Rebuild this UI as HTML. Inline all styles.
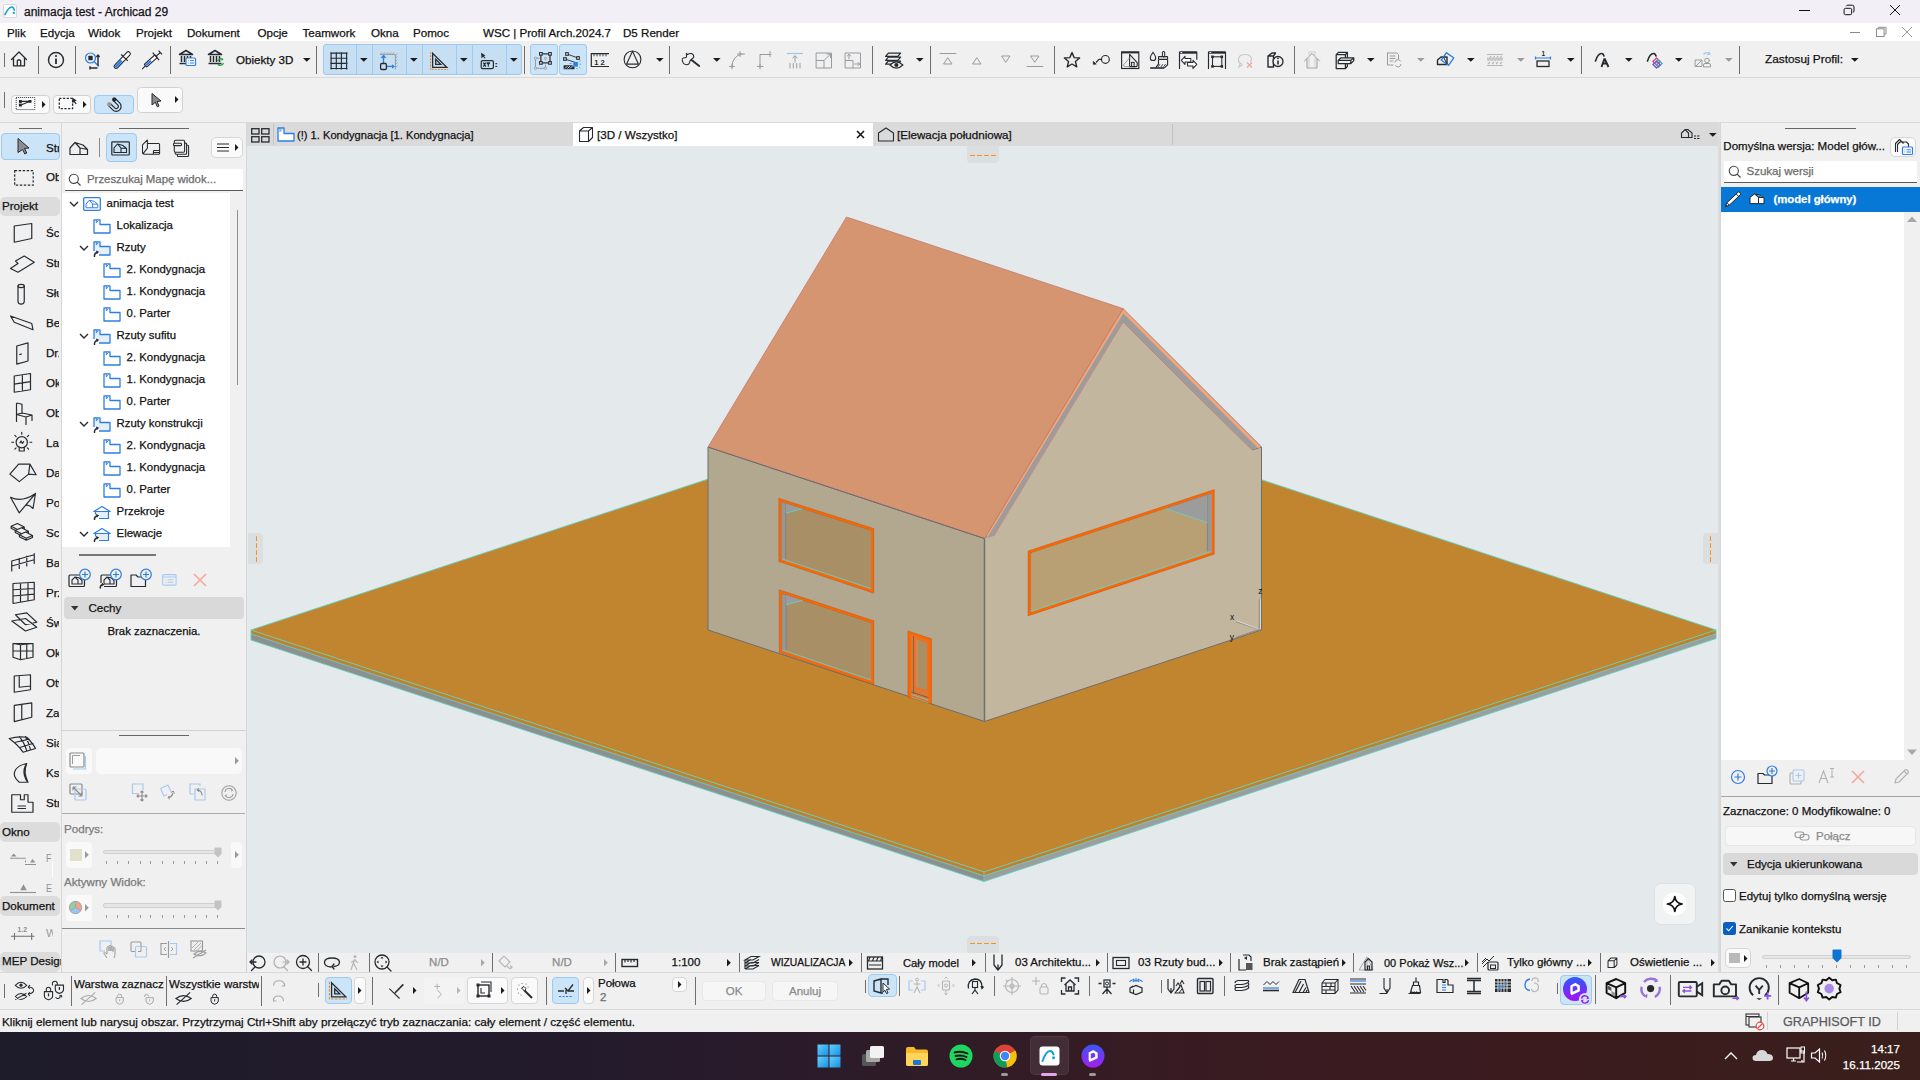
<!DOCTYPE html>
<html><head><meta charset="utf-8"><style>*{box-sizing:border-box;margin:0;padding:0}
html,body{width:1920px;height:1080px;overflow:hidden;background:#f0f0f0;font-family:"Liberation Sans",sans-serif;font-size:12px;color:#1b1b1b}
.a{position:absolute}
.t{position:absolute;white-space:nowrap;line-height:1;-webkit-text-stroke:0.25px currentColor}
svg{position:absolute;overflow:visible}
</style></head><body>
<div class="a" style="left:0px;top:0px;width:1920px;height:23px;background:#f3eff7;"></div>
<div class="a" style="left:0px;top:23px;width:1920px;height:18px;background:#ffffff;"></div>
<div class="a" style="left:0px;top:41px;width:1920px;height:37px;background:#f0f0f0;"></div>
<div class="a" style="left:0px;top:77.0px;width:1920px;height:1px;background:#d9d9d9;"></div>
<div class="a" style="left:0px;top:78px;width:1920px;height:45px;background:#f0f0f0;"></div>
<div class="a" style="left:0px;top:122.0px;width:1920px;height:1px;background:#d9d9d9;"></div>
<div class="a" style="left:0px;top:123px;width:61px;height:850px;background:#f0f0f0;"></div>
<div class="a" style="left:61px;top:123px;width:1px;height:850px;background:#d6d6d6;"></div>
<div class="a" style="left:62px;top:123px;width:185px;height:850px;background:#f0f0f0;"></div>
<div class="a" style="left:246px;top:123px;width:1px;height:850px;background:#d6d6d6;"></div>
<div class="a" style="left:247px;top:123px;width:1473px;height:23px;background:#dadada;"></div>
<div class="a" style="left:247px;top:146px;width:1473px;height:807px;background:#e4e9ec;"></div>
<div class="a" style="left:247px;top:953px;width:1473px;height:19px;background:#f0f0f0;"></div>
<div class="a" style="left:1720px;top:123px;width:200px;height:850px;background:#f0f0f0;"></div>
<div class="a" style="left:1720px;top:123px;width:1px;height:850px;background:#d6d6d6;"></div>
<div class="a" style="left:0px;top:972px;width:1920px;height:38px;background:#f0f0f0;"></div>
<div class="a" style="left:0px;top:972.0px;width:1920px;height:1px;background:#d9d9d9;"></div>
<div class="a" style="left:0px;top:1009.0px;width:1920px;height:1px;background:#d9d9d9;"></div>
<div class="a" style="left:0px;top:1010px;width:1920px;height:22px;background:#f0f0f0;"></div>
<div class="a" style="left:0px;top:1032px;width:1920px;height:48px;background:linear-gradient(90deg,#1e1b2a 0%,#231b2c 30%,#2b1b2a 42%,#301c26 50%,#381b22 62%,#3b1b1e 80%,#3a1f1c 100%);"></div>
<!-- 3D scene -->
<svg width="1920" height="1080" style="left:0;top:0" viewBox="0 0 1920 1080">
 <!-- ground slab -->
 <polygon points="251,633 984,875 984,881.5 251,640" fill="#8f8f8f"/>
 <polygon points="984,875 1716,633 1716,638.5 984,881.5" fill="#9d9d9d"/>
 <polygon points="251,630 984,872 984,875.5 251,633.5" fill="#c2802a"/>
 <polygon points="984,872 1716,630 1716,633.5 984,875.5" fill="#c2802a"/>
 <polygon points="251,630 984,388 1716,630 984,872" fill="#c2852f"/>
 <polyline points="251,634 984,876 1716,634" fill="none" stroke="#5fcfbf" stroke-width="0.9"/>
 <polygon points="251,630 984,388 1716,630 1716,638.5 984,881.5 251,640" fill="none" stroke="#5fcfbf" stroke-width="0.9"/>
 <polyline points="251,630 984,872 1716,630" fill="none" stroke="#5fcfbf" stroke-width="0.9"/>
 <line x1="984" y1="872" x2="984" y2="881.5" stroke="#5fcfbf" stroke-width="0.9"/>
 <!-- left wall -->
 <polygon points="708,447 984.5,538.5 984.5,721.5 708,630" fill="#b2a78f" stroke="#6d6d70" stroke-width="1"/>
 <!-- gable wall -->
 <polygon points="984.5,538.5 1123,322 1252,450 1261.5,447 1261.5,630 984.5,721.5" fill="#c3b69f" stroke="#6d6d70" stroke-width="1"/>
 <!-- roof edge band -->
 <polygon points="984.5,538.5 1123,308.6 1261.4,446.7 1252,450 1123,322 994,536" fill="#9c9c9c"/>
 <polyline points="986.5,536 1123,311 1259.5,447.5" fill="none" stroke="#f0a878" stroke-width="3"/>
 <polyline points="984.5,538.5 1123,308.6 1261.4,446.7" fill="none" stroke="#c87878" stroke-width="0.9"/>
 <polyline points="994,536 1123,322 1252,450" fill="none" stroke="#d08a82" stroke-width="0.9"/>
 <!-- roof -->
 <polygon points="846.5,217 1123,308.6 984.5,538.5 708,447" fill="#d49570" stroke="#c47a70" stroke-width="0.8"/>
 <line x1="708" y1="447" x2="984.5" y2="538.5" stroke="#6d6d70" stroke-width="1"/>
 <line x1="984.5" y1="538.5" x2="984.5" y2="721.5" stroke="#707070" stroke-width="1.5"/>
 <!-- window 1 -->
 <polygon points="778.80,498.30 873.80,528.60 873.80,593.20 778.80,561.60" fill="#ff6600"/>
 <polygon points="781.40,501.86 871.20,530.50 871.20,589.61 781.40,559.74" fill="#a88f65"/>
 <polygon points="781.40,501.86 785.70,503.23 785.70,558.67 781.40,559.74" fill="#979797"/>
 <line x1="785.70" y1="503.23" x2="785.70" y2="558.67" stroke="#7d7d7d" stroke-width="0.8"/>
 <polygon points="785.70,503.23 802.70,508.65 785.70,513.23" fill="#9c9c9c"/>
 <line x1="785.70" y1="513.23" x2="802.70" y2="508.65" stroke="#6fc9c0" stroke-width="0.9"/>
 <line x1="781.90" y1="558.90" x2="871.20" y2="588.61" stroke="#6fc9c0" stroke-width="0.9"/>
 <polygon points="778.80,498.30 873.80,528.60 873.80,593.20 778.80,561.60" fill="none" stroke="#7a4a2a" stroke-width="0.5" stroke-opacity="0.55"/>
 <polyline points="781.40,559.74 781.40,501.86 871.20,530.50" fill="none" stroke="#6a4a30" stroke-width="0.6" stroke-opacity="0.6" stroke-dasharray="1,1"/>
 <!-- window 2 -->
 <polygon points="779.20,589.80 873.80,620.80 873.80,684.60 779.20,652.60" fill="#ff6600"/>
 <polygon points="781.80,593.39 871.20,622.68 871.20,680.98 781.80,650.74" fill="#a88f65"/>
 <polygon points="781.80,593.39 786.10,594.80 786.10,649.70 781.80,650.74" fill="#979797"/>
 <line x1="786.10" y1="594.80" x2="786.10" y2="649.70" stroke="#7d7d7d" stroke-width="0.8"/>
 <polygon points="786.10,594.80 803.10,600.37 786.10,604.80" fill="#9c9c9c"/>
 <line x1="786.10" y1="604.80" x2="803.10" y2="600.37" stroke="#6fc9c0" stroke-width="0.9"/>
 <line x1="782.30" y1="649.91" x2="871.20" y2="679.98" stroke="#6fc9c0" stroke-width="0.9"/>
 <polygon points="779.20,589.80 873.80,620.80 873.80,684.60 779.20,652.60" fill="none" stroke="#7a4a2a" stroke-width="0.5" stroke-opacity="0.55"/>
 <polyline points="781.80,650.74 781.80,593.39 871.20,622.68" fill="none" stroke="#6a4a30" stroke-width="0.6" stroke-opacity="0.6" stroke-dasharray="1,1"/>
 <!-- door -->
 <polygon points="907.9,630.9 931.5,638.8 931.5,704.1 907.9,697" fill="#ff6600"/>
 <polygon points="910.9,634.8 928.5,640.7 928.5,701.2 910.9,695.2" fill="#d97a3a"/>
 <line x1="913.6" y1="636" x2="913.6" y2="694" stroke="#6b5a4a" stroke-width="0.8"/>
 <polygon points="914.3,637.3 928.5,642 928.5,692.6 914.3,687.9" fill="#ff6a10"/>
 <polygon points="915.8,639.3 927,643 927,690.7 915.8,686.9" fill="#a88f65"/>
 <polygon points="915.8,639.3 918,640 918,687.6 915.8,686.9" fill="#c98a5a"/>
 <line x1="911.5" y1="694.5" x2="928.5" y2="700.3" stroke="#6fc9c0" stroke-width="0.9"/>
 <line x1="911.5" y1="697.2" x2="928.5" y2="703" stroke="#6fc9c0" stroke-width="0.9"/>
 <line x1="911.5" y1="692" x2="928.5" y2="697.6" stroke="#5a5048" stroke-width="0.7"/>
 <polygon points="907.9,630.9 931.5,638.8 931.5,704.1 907.9,697" fill="none" stroke="#7a4a2a" stroke-width="0.5" stroke-opacity="0.55"/>
 <!-- window 3 -->
 <polygon points="1028.00,551.00 1214.30,489.60 1214.30,554.20 1028.00,615.90" fill="#ff6600"/>
 <polygon points="1030.60,552.88 1211.70,493.19 1211.70,552.32 1030.60,612.30" fill="#b8a074"/>
 <polygon points="1207.40,494.61 1211.70,493.19 1211.70,552.32 1207.40,551.25" fill="#979797"/>
 <line x1="1207.40" y1="494.61" x2="1207.40" y2="551.25" stroke="#7d7d7d" stroke-width="0.8"/>
 <polygon points="1207.40,494.61 1165.40,508.45 1207.40,522.61" fill="#9c9c9c"/>
 <line x1="1207.40" y1="522.61" x2="1165.40" y2="508.45" stroke="#6fc9c0" stroke-width="0.9"/>
 <line x1="1030.60" y1="611.30" x2="1211.20" y2="551.49" stroke="#6fc9c0" stroke-width="0.9"/>
 <polygon points="1028.00,551.00 1214.30,489.60 1214.30,554.20 1028.00,615.90" fill="none" stroke="#7a4a2a" stroke-width="0.5" stroke-opacity="0.55"/>
 <polyline points="1030.60,612.30 1030.60,552.88 1211.70,493.19" fill="none" stroke="#6a4a30" stroke-width="0.6" stroke-opacity="0.6" stroke-dasharray="1,1"/>
 <!-- axis gizmo -->
 <path d="M1259.3,599 V629.6 M1259.3,629.6 L1236.2,621.8 M1259.3,629.6 L1235.5,637.6" fill="none" stroke="#8f8a80" stroke-width="1.1"/>
 <path d="M1260.4,599 V629 M1258.6,629 L1236.6,620.8" fill="none" stroke="#f4f1ea" stroke-width="0.7"/>
 <text x="1258.2" y="593.6" font-size="8.5" font-family="Liberation Sans" fill="#111">z</text>
 <text x="1230" y="620.4" font-size="8.5" font-family="Liberation Sans" fill="#111">x</text>
 <text x="1229.8" y="639.6" font-size="8.5" font-family="Liberation Sans" fill="#111">y</text>
</svg>
<svg style="left:3px;top:4px" width="14" height="14" viewBox="0 0 14 14"><rect x="0.5" y="0.5" width="13" height="13" rx="1.5" fill="#fff" stroke="#cfcfcf" stroke-width="0.8"/><path d="M2,10.6 C4.5,5.5 6.5,3 8.7,3 C10.3,3 11,4.5 11.3,6.2" fill="none" stroke="#139fd6" stroke-width="1.6" stroke-linecap="round"/><rect x="9.8" y="7.8" width="2" height="2" fill="#139fd6"/></svg>
<div class="t" style="left:24px;top:5.84px;font-size:12px;color:#111;font-weight:normal;">animacja test - Archicad 29</div>
<div class="a" style="left:1799px;top:9.9px;width:10.5px;height:1px;background:#111;"></div>
<svg style="left:1840px;top:2px" width="18" height="16" viewBox="1840 2 18 16"><rect x="1844.1" y="8.3" width="7.6" height="6.4" rx="1.4" fill="none" stroke="#111" stroke-width="1"/><path d="M1846.2,6.3 Q1846.6,5.2 1847.8,5.2 H1852.3 Q1854,5.2 1854,6.9 V10.9 Q1854,12.1 1853,12.4" fill="none" stroke="#111" stroke-width="1"/></svg>
<svg style="left:1886px;top:2px" width="18" height="16" viewBox="1886 2 18 16"><path d="M1890,5.1 L1900,15 M1900,5.1 L1890,15" stroke="#111" stroke-width="1"/></svg>
<div class="t" style="left:7px;top:26.88px;font-size:11.6px;color:#111;font-weight:normal;">Plik</div>
<div class="t" style="left:40px;top:26.88px;font-size:11.6px;color:#111;font-weight:normal;">Edycja</div>
<div class="t" style="left:88px;top:26.88px;font-size:11.6px;color:#111;font-weight:normal;">Widok</div>
<div class="t" style="left:136px;top:26.88px;font-size:11.6px;color:#111;font-weight:normal;">Projekt</div>
<div class="t" style="left:187px;top:26.88px;font-size:11.6px;color:#111;font-weight:normal;">Dokument</div>
<div class="t" style="left:257.5px;top:26.88px;font-size:11.6px;color:#111;font-weight:normal;">Opcje</div>
<div class="t" style="left:302.5px;top:26.88px;font-size:11.6px;color:#111;font-weight:normal;">Teamwork</div>
<div class="t" style="left:371px;top:26.88px;font-size:11.6px;color:#111;font-weight:normal;">Okna</div>
<div class="t" style="left:413px;top:26.88px;font-size:11.6px;color:#111;font-weight:normal;">Pomoc</div>
<div class="t" style="left:483px;top:26.88px;font-size:11.6px;color:#111;font-weight:normal;">WSC | Profil Arch.2024.7</div>
<div class="t" style="left:623px;top:26.88px;font-size:11.6px;color:#111;font-weight:normal;">D5 Render</div>
<div class="a" style="left:1850px;top:31.9px;width:10px;height:1px;background:#8a8a8a;"></div>
<svg style="left:1872px;top:24px" width="18" height="16" viewBox="1872 24 18 16"><rect x="1876.5" y="28.8" width="7.6" height="7.7" fill="none" stroke="#8a8a8a" stroke-width="1"/><path d="M1878.5,28.8 V27.3 H1886 V34 H1884.1" fill="none" stroke="#8a8a8a" stroke-width="1"/></svg>
<svg style="left:1898px;top:24px" width="18" height="16" viewBox="1898 24 18 16"><path d="M1902,27.2 L1912,37 M1912,27.2 L1902,37" stroke="#8a8a8a" stroke-width="0.9"/></svg>
<div class="a" style="left:4.0px;top:53px;width:1px;height:13.5px;background:#6e6e6e;"></div>
<div class="a" style="left:38.0px;top:46px;width:1px;height:27.5px;background:#6e6e6e;"></div>
<div class="a" style="left:75.0px;top:46px;width:1px;height:27.5px;background:#6e6e6e;"></div>
<div class="a" style="left:169.8px;top:46px;width:1px;height:27.5px;background:#6e6e6e;"></div>
<div class="a" style="left:316.0px;top:46px;width:1px;height:27.5px;background:#6e6e6e;"></div>
<div class="a" style="left:524.0px;top:46px;width:1px;height:27.5px;background:#6e6e6e;"></div>
<div class="a" style="left:669.0px;top:46px;width:1px;height:27.5px;background:#6e6e6e;"></div>
<div class="a" style="left:872.0px;top:46px;width:1px;height:27.5px;background:#6e6e6e;"></div>
<div class="a" style="left:930.0px;top:46px;width:1px;height:27.5px;background:#6e6e6e;"></div>
<div class="a" style="left:1054.0px;top:46px;width:1px;height:27.5px;background:#6e6e6e;"></div>
<div class="a" style="left:1294.0px;top:46px;width:1px;height:27.5px;background:#6e6e6e;"></div>
<div class="a" style="left:1581.0px;top:46px;width:1px;height:27.5px;background:#6e6e6e;"></div>
<div class="a" style="left:1739.0px;top:46px;width:1px;height:27.5px;background:#6e6e6e;"></div>
<svg style="left:9.00px;top:49.00px" width="20.00" height="20.00" viewBox="0 0 20 20"><path d="M2.5,10.5 L10,3 L17.5,10.5 M4.5,8.5 V16.8 H15.5 V8.5 M8.3,16.8 V12 Q8.3,11 9.3,11 H10.7 Q11.7,11 11.7,12 V16.8" fill="none" stroke="#262b30" stroke-width="1.3" stroke-linejoin="round" stroke-linecap="round"/></svg>
<svg style="left:46.00px;top:50.00px" width="20.00" height="20.00" viewBox="0 0 20 20"><circle cx="10" cy="10" r="7.5" fill="none" stroke="#262b30" stroke-width="1.4" stroke-linejoin="round" stroke-linecap="round"/><path d="M10,8.5 V14" stroke="#262b30" stroke-width="1.8"/><circle cx="10" cy="6" r="1.1" fill="#262b30"/></svg>
<svg style="left:83.00px;top:49.50px" width="20.00" height="20.00" viewBox="0 0 20 20"><circle cx="7.5" cy="8" r="5" fill="none" stroke="#2f7de1" stroke-width="1.2"/><rect x="5.3" y="5.8" width="4.4" height="4.4" rx="0.8" fill="#262b30"/><path d="M11,11.5 L16,16.5" stroke="#2f7de1" stroke-width="1.2"/><path d="M15,15 V5.5 M13.8,6.5 L15,5 L16.2,6.5" fill="none" stroke="#262b30" stroke-width="1.4" stroke-linejoin="round" stroke-linecap="round"/><path d="M14,18 H7.5 M7,16.8 V19" fill="none" stroke="#262b30" stroke-width="1.4" stroke-linejoin="round" stroke-linecap="round"/></svg>
<svg style="left:112.00px;top:49.50px" width="20.00" height="20.00" viewBox="0 0 20 20"><g transform="rotate(-46 10.2 10.1)"><rect x="-0.6" y="8.1" width="21.6" height="4" rx="2" fill="#fff" stroke="#262b30" stroke-width="1.1"/><path d="M0.2,8.9 H9.5 V11.3 H0.2 Z" fill="#2a7ff0"/><path d="M13.5,5.5 V14.7" stroke="#262b30" stroke-width="1.2"/></g></svg>
<svg style="left:141.00px;top:49.50px" width="20.00" height="20.00" viewBox="0 0 20 20"><path d="M1.2,19.2 L4.3,15.9" stroke="#262b30" stroke-width="1.1"/><g transform="rotate(-41.5 9.8 10.9)"><rect x="2.5" y="9.1" width="14.6" height="3.6" rx="0.8" fill="#fff" stroke="#262b30" stroke-width="1.1"/><path d="M3.2,9.8 H10 V12 H3.2 Z" fill="#2a7ff0"/><path d="M16.6,6 V15.8 M17,10.9 H22.5 M22.5,8.3 V13.5" stroke="#262b30" stroke-width="1.2"/></g></svg>
<svg style="left:177.00px;top:48.00px" width="20.00" height="20.00" viewBox="0 0 20 20"><path d="M2.5,6.5 L9,2.5 L15.5,6.5 Z M2.5,15.5 H15.5 M4.5,8 V14 M7.5,8 V14 M10.5,8 V14 M13.5,8 V14" fill="none" stroke="#262b30" stroke-width="1.5" stroke-linejoin="round"/><rect x="9" y="10" width="9.5" height="7.5" rx="1" fill="#fff" stroke="#2f7de1" stroke-width="1.2"/><path d="M11,12.6 H11.6 M13,12.6 H17 M11,15 H11.6 M13,15 H17" stroke="#2f7de1" stroke-width="1"/></svg>
<svg style="left:206.00px;top:48.00px" width="20.00" height="20.00" viewBox="0 0 20 20"><path d="M2.5,6.5 L9,2.5 L15.5,6.5 Z M2.5,15.5 H15.5 M4.5,8 V14 M7.5,8 V14 M10.5,8 V14 M13.5,8 V14" fill="none" stroke="#262b30" stroke-width="1.5" stroke-linejoin="round"/><path d="M11.5,13 A3.5,3.5 0 0 1 17,11.5 M17.5,15 A3.5,3.5 0 0 1 12,16.5" fill="none" stroke="#22a447" stroke-width="1.3"/><path d="M16,10 L17.5,12 L15,12.5 Z M13,18 L11.5,16 L14,15.5 Z" fill="#22a447"/></svg>
<div class="t" style="left:236px;top:54.18px;font-size:11.6px;color:#111;font-weight:normal;">Obiekty 3D</div>
<svg style="left:302.7px;top:58.1px" width="7.6" height="3.8" viewBox="0 0 7.6 3.8"><polygon points="0,0 7.6,0 3.8,3.8" fill="#1b1b1b"/></svg>
<div class="a" style="left:322.5px;top:44px;width:199.5px;height:30.5px;background:#c6dff3;border:1px solid #9ccaf0;border-radius:3px"></div>
<div class="a" style="left:355.5px;top:45px;width:1px;height:28.5px;background:#9ccaf0;"></div>
<div class="a" style="left:371.5px;top:45px;width:1px;height:28.5px;background:#9ccaf0;"></div>
<div class="a" style="left:405.5px;top:45px;width:1px;height:28.5px;background:#9ccaf0;"></div>
<div class="a" style="left:421.5px;top:45px;width:1px;height:28.5px;background:#9ccaf0;"></div>
<div class="a" style="left:455.5px;top:45px;width:1px;height:28.5px;background:#9ccaf0;"></div>
<div class="a" style="left:471.5px;top:45px;width:1px;height:28.5px;background:#9ccaf0;"></div>
<div class="a" style="left:505.5px;top:45px;width:1px;height:28.5px;background:#9ccaf0;"></div>
<svg style="left:360.2px;top:58.1px" width="7.6" height="3.8" viewBox="0 0 7.6 3.8"><polygon points="0,0 7.6,0 3.8,3.8" fill="#1b1b1b"/></svg>
<svg style="left:410.2px;top:58.1px" width="7.6" height="3.8" viewBox="0 0 7.6 3.8"><polygon points="0,0 7.6,0 3.8,3.8" fill="#1b1b1b"/></svg>
<svg style="left:460.2px;top:58.1px" width="7.6" height="3.8" viewBox="0 0 7.6 3.8"><polygon points="0,0 7.6,0 3.8,3.8" fill="#1b1b1b"/></svg>
<svg style="left:510.2px;top:58.1px" width="7.6" height="3.8" viewBox="0 0 7.6 3.8"><polygon points="0,0 7.6,0 3.8,3.8" fill="#1b1b1b"/></svg>
<svg style="left:328px;top:50px" width="22" height="22" viewBox="328 50 22 22"><path d="M330.3,53.1 H347.5 M330.3,58.2 H347.5 M330.3,63.4 H347.5 M330.3,68.5 H347.5 M331.1,52.2 V69.4 M336.3,52.2 V69.4 M341.4,52.2 V69.4 M346.6,52.2 V69.4" stroke="#262b30" stroke-width="1.15"/></svg>
<svg style="left:378px;top:50px" width="22" height="22" viewBox="378 50 22 22"><path d="M380,54.4 H395.4 V69.5" fill="none" stroke="#9a9a9a" stroke-width="1"/><path d="M380.5,54 L382,52.3 M383.5,54 L385,52.3 M386.5,54 L388,52.3 M389.5,54 L391,52.3 M392.5,54 L394,52.3 M395.8,55 L397.3,53.5 M395.8,58 L397.3,56.5 M395.8,61 L397.3,59.5 M395.8,64 L397.3,62.5 M395.8,67 L397.3,65.5" stroke="#9a9a9a" stroke-width="0.9"/><path d="M383.5,63 V56" stroke="#2f7de1" stroke-width="1.3"/><path d="M381.3,57.6 L383.5,55 L385.7,57.6 Z" fill="#2f7de1" stroke="#2f7de1" stroke-width="0.8"/><path d="M386.6,66.4 H393" stroke="#2f7de1" stroke-width="1.3"/><path d="M392,64.2 L395,66.4 L392,68.6 Z" fill="#2f7de1"/><rect x="380.6" y="63.5" width="5.8" height="6" rx="1.2" fill="none" stroke="#262b30" stroke-width="1.3"/></svg>
<svg style="left:428px;top:50px" width="22" height="22" viewBox="428 50 22 22"><path d="M430.5,52.2 V69.5 H448" fill="none" stroke="#f5861f" stroke-width="1.1" stroke-dasharray="1.8,1.3"/><path d="M432.6,53.3 V67.3 H446.8 Z M435.7,59.3 V64.3 H440.7 Z" fill="none" stroke="#262b30" stroke-width="1.3" stroke-linejoin="miter"/></svg>
<svg style="left:478px;top:50px" width="22" height="22" viewBox="478 50 22 22"><path d="M481,52.8 L485.6,55.4 L483.8,56 L485.6,58 L484.8,58.6 L483,56.7 L481.6,58.5 Z" fill="#262b30"/><rect x="481.2" y="60.6" width="12.2" height="8" rx="1.4" fill="none" stroke="#262b30" stroke-width="1.2"/><path d="M483.3,62.6 L485.8,66.6 M485.8,62.6 L483.3,66.6 M486.8,62.6 L488.3,64.6 L489.8,62.6 M488.3,64.6 V66.7" stroke="#262b30" stroke-width="1.1"/><path d="M495.3,63.7 H497.2 M495.3,66.4 H497.2" stroke="#262b30" stroke-width="1"/></svg>
<div class="a" style="left:530px;top:44px;width:28px;height:30.5px;background:#cce4f7;border:1px solid #9ccaf0;border-radius:3px"></div>
<div class="a" style="left:559px;top:44px;width:28px;height:30.5px;background:#cce4f7;border:1px solid #9ccaf0;border-radius:3px"></div>
<svg style="left:530px;top:48px" width="28" height="24" viewBox="530 48 28 24"><path d="M535.5,58.3 V68.3 H545.5 V64.5 M535.5,58.3 H539.5" fill="none" stroke="#9a9a9a" stroke-width="1"/><circle cx="535.5" cy="58.3" r="1.2" fill="#cce4f7" stroke="#9a9a9a" stroke-width="0.9"/><circle cx="535.5" cy="68.3" r="1.2" fill="#cce4f7" stroke="#9a9a9a" stroke-width="0.9"/><circle cx="545.5" cy="68.3" r="1.2" fill="#cce4f7" stroke="#9a9a9a" stroke-width="0.9"/><rect x="540.9" y="53.9" width="9.1" height="9" fill="none" stroke="#262b30" stroke-width="1.2"/><rect x="539.6" y="52.6" width="2.6" height="2.6" fill="#fff" stroke="#262b30" stroke-width="1.1"/><rect x="548.7" y="52.6" width="2.6" height="2.6" fill="#fff" stroke="#262b30" stroke-width="1.1"/><rect x="539.6" y="61.6" width="2.6" height="2.6" fill="#fff" stroke="#262b30" stroke-width="1.1"/><rect x="548.7" y="61.6" width="2.6" height="2.6" fill="#fff" stroke="#262b30" stroke-width="1.1"/><circle cx="545.5" cy="58.3" r="1.1" fill="none" stroke="#9a9a9a" stroke-width="0.8"/><path d="M545.5,59.4 V60.5" stroke="#9a9a9a" stroke-width="0.8"/></svg>
<svg style="left:559px;top:48px" width="28" height="24" viewBox="559 48 28 24"><path d="M567,54 L578,58 M565,59 L575.5,62.5" stroke="#262b30" stroke-width="0.9"/><rect x="565.7" y="52.7" width="2.6" height="2.6" fill="#fff" stroke="#262b30" stroke-width="1.1"/><rect x="563.7" y="57.7" width="2.6" height="2.6" fill="#fff" stroke="#262b30" stroke-width="1.1"/><rect x="576.7" y="56.7" width="2.6" height="2.6" fill="#fff" stroke="#262b30" stroke-width="1.1"/><path d="M563.6,65.2 H572 L574.5,67 V69.3 H563.6 Z" fill="#262b30"/><path d="M565,68.5 L567.5,66 M567.5,68.5 L570,66 M570,68.5 L572.5,66" stroke="#cce4f7" stroke-width="0.9"/><rect x="573.3" y="62" width="4.6" height="4.6" fill="#2f7de1"/><path d="M579.3,61.5 L580.5,60.5 M579.5,64.2 H581 M579.3,67.2 L580.5,68.2 M576.5,68 L577.5,69.3 M569.5,63.5 H571.5" stroke="#2f7de1" stroke-width="0.7"/></svg>
<svg style="left:589px;top:50px" width="22" height="20" viewBox="589 50 22 20"><path d="M609,53.7 H591.3 V66.5 H609" fill="none" stroke="#262b30" stroke-width="1.2"/><path d="M594,53.7 V56.3 M597,53.7 V56.3 M600,53.7 V56.3 M603,53.7 V56.3 M606,53.7 V56.3" stroke="#262b30" stroke-width="0.9"/><text x="594.3" y="64.8" font-size="7.6" font-family="Liberation Sans" font-weight="bold" fill="#262b30">1</text><text x="600.5" y="64.8" font-size="7.6" font-family="Liberation Sans" font-weight="bold" fill="#262b30">2</text></svg>
<svg style="left:622px;top:48px" width="22" height="24" viewBox="622 48 22 24"><circle cx="632.5" cy="59.4" r="8.4" fill="none" stroke="#262b30" stroke-width="1.1"/><path d="M632.5,51.3 L638.4,64.1 H626.6 Z" fill="none" stroke="#262b30" stroke-width="1.1" stroke-linejoin="round"/></svg>
<svg style="left:655.7px;top:58.1px" width="7.6" height="3.8" viewBox="0 0 7.6 3.8"><polygon points="0,0 7.6,0 3.8,3.8" fill="#1b1b1b"/></svg>
<svg style="left:680px;top:50px" width="22" height="20" viewBox="680 50 22 20"><path d="M686.4,53.3 L687.6,54.6 Q689.5,53 691.5,53.6 Q694.2,54.6 693.7,57.4 L691.3,59.5 Q689.6,60.8 689.6,62.6 Q689,64.8 686.4,64.8 Q683.2,64.3 682.3,60.6 Q681.9,58.2 683.3,57.9 Q685.2,57.9 686.3,57.2 Q686.9,56.3 686.4,55.4 Z" fill="none" stroke="#262b30" stroke-width="1.05" stroke-linejoin="round"/><path d="M691.6,60 L699.2,66" stroke="#262b30" stroke-width="1.9" stroke-linecap="round"/></svg>
<svg style="left:713.2px;top:58.1px" width="7.6" height="3.8" viewBox="0 0 7.6 3.8"><polygon points="0,0 7.6,0 3.8,3.8" fill="#1b1b1b"/></svg>
<svg style="left:726.00px;top:49.50px" width="20.00" height="20.00" viewBox="0 0 20 20"><path d="M6,17 Q6,6 16,4" fill="none" stroke="#979b9e" stroke-width="1.0" stroke-linejoin="round" stroke-linecap="round"/><path d="M14,1.5 V6.5 M11.5,4 H18.5 M3.5,16.5 H8.5 M6,14 V19" fill="none" stroke="#979b9e" stroke-width="1.0" stroke-linejoin="round" stroke-linecap="round"/></svg>
<svg style="left:755.00px;top:49.50px" width="20.00" height="20.00" viewBox="0 0 20 20"><path d="M5,17 V4.5 H16" fill="none" stroke="#979b9e" stroke-width="1.0" stroke-linejoin="round" stroke-linecap="round"/><path d="M15,1.5 V6.5 M2.5,16.5 H8 M5,14 V19" fill="none" stroke="#979b9e" stroke-width="1.0" stroke-linejoin="round" stroke-linecap="round"/></svg>
<svg style="left:785.00px;top:49.50px" width="20.00" height="20.00" viewBox="0 0 20 20"><path d="M2,3.5 H18" stroke="#9ec4f0" stroke-width="1.2"/><path d="M10,6 V12 M7.8,8 L10,5.8 L12.2,8 M5,13.5 V18 M8.3,13.5 V18 M11.7,13.5 V18 M15,13.5 V18" fill="none" stroke="#979b9e" stroke-width="1.0" stroke-linejoin="round" stroke-linecap="round"/></svg>
<svg style="left:814.00px;top:49.50px" width="20.00" height="20.00" viewBox="0 0 20 20"><rect x="2.5" y="3" width="15" height="15" fill="none" stroke="#979b9e" stroke-width="1.0" stroke-linejoin="round" stroke-linecap="round"/><path d="M2.5,10.5 H10 V18 M10,10.5 L16.5,4 M13,4 H16.5 V7.5" fill="none" stroke="#979b9e" stroke-width="1.0" stroke-linejoin="round" stroke-linecap="round"/></svg>
<svg style="left:843.00px;top:49.50px" width="20.00" height="20.00" viewBox="0 0 20 20"><rect x="2.5" y="3" width="15" height="15" fill="none" stroke="#979b9e" stroke-width="1.0" stroke-linejoin="round" stroke-linecap="round"/><path d="M2.5,10.5 H10 V18 M6,9 V4.5 M4.3,6 L6,4.3 L7.7,6 M11.5,14 H16.5 M15,12.3 L16.7,14 L15,15.7" fill="none" stroke="#979b9e" stroke-width="1.0" stroke-linejoin="round" stroke-linecap="round"/></svg>
<svg style="left:882px;top:50px" width="24" height="22" viewBox="882 50 24 22"><path d="M885.6,64.2 L888.4,61 H900.6 L897.8,64.2 Z" fill="#f0f0f0" stroke="#262b30" stroke-width="1.25" stroke-linejoin="round"/><path d="M885.6,60.3 L888.4,57.1 H900.6 L897.8,60.3 Z" fill="#f0f0f0" stroke="#262b30" stroke-width="1.25" stroke-linejoin="round"/><path d="M885.6,56.4 L888.4,53.2 H900.6 L897.8,56.4 Z" fill="#f0f0f0" stroke="#262b30" stroke-width="1.25" stroke-linejoin="round"/><path d="M890,65 Q896.4,58.6 902.8,65 Q896.4,71.4 890,65 Z" fill="#f0f0f0" stroke="#262b30" stroke-width="1.2"/><circle cx="896.4" cy="65" r="2.1" fill="#262b30"/></svg>
<svg style="left:916.2px;top:58.1px" width="7.6" height="3.8" viewBox="0 0 7.6 3.8"><polygon points="0,0 7.6,0 3.8,3.8" fill="#1b1b1b"/></svg>
<svg style="left:938.00px;top:49.50px" width="20.00" height="20.00" viewBox="0 0 20 20"><path d="M2,3.5 H18 M10,8 L14,14 H6 Z" fill="none" stroke="#979b9e" stroke-width="1.0" stroke-linejoin="round" stroke-linecap="round"/></svg>
<svg style="left:967.00px;top:49.50px" width="20.00" height="20.00" viewBox="0 0 20 20"><path d="M10,8 L14,14 H6 Z" fill="none" stroke="#979b9e" stroke-width="1.0" stroke-linejoin="round" stroke-linecap="round"/></svg>
<svg style="left:996.00px;top:49.50px" width="20.00" height="20.00" viewBox="0 0 20 20"><path d="M10,12 L14,6 H6 Z" fill="none" stroke="#979b9e" stroke-width="1.0" stroke-linejoin="round" stroke-linecap="round"/></svg>
<svg style="left:1025.00px;top:49.50px" width="20.00" height="20.00" viewBox="0 0 20 20"><path d="M2,16.5 H18 M10,12 L14,6 H6 Z" fill="none" stroke="#979b9e" stroke-width="1.0" stroke-linejoin="round" stroke-linecap="round"/></svg>
<svg style="left:1062.00px;top:49.50px" width="20.00" height="20.00" viewBox="0 0 20 20"><path d="M10,2.5 L12.2,7.6 L17.6,8 L13.4,11.5 L14.8,16.9 L10,14 L5.2,16.9 L6.6,11.5 L2.4,8 L7.8,7.6 Z" fill="none" stroke="#262b30" stroke-width="1.4" stroke-linejoin="round" stroke-linecap="round"/></svg>
<svg style="left:1090px;top:50px" width="22" height="20" viewBox="1090 50 22 20"><circle cx="1105.4" cy="59.4" r="3.9" fill="none" stroke="#262b30" stroke-width="1.15"/><path d="M1101.5,59.4 H1099 L1096,62.5" fill="none" stroke="#262b30" stroke-width="1.15"/><path d="M1093.2,61.5 L1093.4,64.3 L1096.2,64.1 Z" fill="#262b30" stroke="#262b30" stroke-width="0.8"/></svg>
<svg style="left:1119px;top:49px" width="22" height="22" viewBox="1119 49 22 22"><rect x="1121.6" y="51.9" width="17.2" height="16.6" fill="none" stroke="#262b30" stroke-width="1.15"/><path d="M1121.6,52.6 H1138.8" stroke="#262b30" stroke-width="1.6"/><path d="M1129.6,66.6 V54.4 L1137.2,62.6 V65.5 Q1137.2,66.6 1136.1,66.6 Z" fill="none" stroke="#262b30" stroke-width="1.1" stroke-linejoin="round"/><rect x="1131.6" y="62.4" width="2.5" height="4.2" fill="none" stroke="#262b30" stroke-width="1"/><path d="M1129.6,57.8 L1123.7,64.8 Q1123.2,66.6 1124.6,66.6 H1129.6" fill="none" stroke="#8a8a8a" stroke-width="0.8"/></svg>
<svg style="left:1147px;top:48px" width="24" height="24" viewBox="1147 48 24 24"><path d="M1153,52.3 Q1150.3,56.2 1150.3,57.9 A2.7,2.7 0 0 0 1155.7,57.9 Q1155.7,56.2 1153,52.3 Z" fill="none" stroke="#262b30" stroke-width="1.05"/><rect x="1162.4" y="51.4" width="2.3" height="5.5" rx="1.1" fill="none" stroke="#262b30" stroke-width="1.05"/><rect x="1158.5" y="56.6" width="9.1" height="2.8" rx="0.6" fill="none" stroke="#262b30" stroke-width="1.1"/><path d="M1158.5,59.4 V64 L1156.1,67.2 M1167.6,59.4 V64.7 L1164.2,68.2" fill="none" stroke="#262b30" stroke-width="1.1"/><path d="M1150.2,68 H1164" stroke="#262b30" stroke-width="1.6"/><path d="M1157.8,67 L1160,64.2 M1160.8,67 L1163,64.2 M1163.5,66.8 L1165.6,64.2" stroke="#262b30" stroke-width="0.9"/></svg>
<svg style="left:1177px;top:49px" width="22" height="22" viewBox="1177 49 22 22"><path d="M1179.5,69 V52.4 H1196.8 V59.8" fill="none" stroke="#262b30" stroke-width="1.15"/><path d="M1179.5,52.5 H1196.8" stroke="#262b30" stroke-width="2.4"/><rect x="1180.4" y="52" width="1.8" height="0.9" fill="#fff"/><path d="M1181.3,60.3 L1185,56.3 V58.5 H1190.8 V62 H1185 V64.4 Z" fill="#fff" stroke="#262b30" stroke-width="1.05" stroke-linejoin="round"/><path d="M1196.8,64.3 L1193,60.3 V62.5 H1187.6 V66 H1193 V68.4 Z" fill="#fff" stroke="#262b30" stroke-width="1.05" stroke-linejoin="round"/></svg>
<svg style="left:1206px;top:49px" width="22" height="22" viewBox="1206 49 22 22"><path d="M1208.5,69 V52.4 H1225.5 V69" fill="none" stroke="#262b30" stroke-width="1.15"/><path d="M1208.5,52.5 H1225.5" stroke="#262b30" stroke-width="2.4"/><rect x="1209.4" y="52" width="1.8" height="0.9" fill="#fff"/><rect x="1212.5" y="56.8" width="9.3" height="9.6" fill="none" stroke="#262b30" stroke-width="1.05"/><rect x="1211.2" y="55.5" width="2.6" height="2.6" fill="#262b30"/><rect x="1220.5" y="55.5" width="2.6" height="2.6" fill="#262b30"/><rect x="1211.2" y="65.1" width="2.6" height="2.6" fill="#262b30"/><rect x="1220.5" y="65.1" width="2.6" height="2.6" fill="#262b30"/></svg>
<svg style="left:1236.00px;top:49.50px" width="20.00" height="20.00" viewBox="0 0 20 20"><path d="M6,14 Q2,13 2.5,9 Q3,4.5 9,4.5 Q15,4.5 15.5,9 Q15.5,11 14,12" fill="none" stroke="#c8c8c8" stroke-width="1.2"/><path d="M4,14 L3,17 L6.5,14.5" fill="none" stroke="#c8c8c8" stroke-width="1.2"/><path d="M11,12.5 L16,17.5 M16,12.5 L11,17.5" stroke="#f4a49a" stroke-width="1.2"/></svg>
<svg style="left:1265.00px;top:49.50px" width="20.00" height="20.00" viewBox="0 0 20 20"><path d="M3,17 V6 L7,3 H10.5 L8.5,6 V17 Z M3,6 H8.5" fill="none" stroke="#262b30" stroke-width="1.4" stroke-linejoin="round" stroke-linecap="round"/><circle cx="13" cy="11.5" r="5" fill="#f0f0f0" stroke="#262b30" stroke-width="1.3"/><path d="M13,10.5 V14.5" stroke="#262b30" stroke-width="1.6"/><circle cx="13" cy="8.3" r="0.9" fill="#262b30"/></svg>
<svg style="left:1302.00px;top:49.50px" width="20.00" height="20.00" viewBox="0 0 20 20"><path d="M2.5,11 L10,3.5 L17.5,11 M5,9 V18 H15 V9" fill="none" stroke="#979b9e" stroke-width="1.0" stroke-linejoin="round" stroke-linecap="round"/><rect x="7" y="2" width="6" height="16" fill="none" stroke="#d0d0d0" stroke-width="1"/></svg>
<svg style="left:1332px;top:49px" width="24" height="22" viewBox="1332 49 24 22"><path d="M1336.2,68.5 V54.6 L1338.4,52.4 H1347.4 V66.4 L1345.4,68.5 Z M1336.2,54.6 H1345.4 V68.5 M1345.4,54.6 L1347.4,52.4" fill="#f0f0f0" stroke="#262b30" stroke-width="1.25" stroke-linejoin="round"/><path d="M1338.2,63.6 V60.4 L1341,57.8 H1353.8 V60.6 L1350.8,63.6 Z M1338.2,60.4 H1350.8 V63.6 M1350.8,60.4 L1353.8,57.8" fill="#f0f0f0" stroke="#262b30" stroke-width="1.25" stroke-linejoin="round"/></svg>
<svg style="left:1367.2px;top:58.1px" width="7.6" height="3.8" viewBox="0 0 7.6 3.8"><polygon points="0,0 7.6,0 3.8,3.8" fill="#1b1b1b"/></svg>
<svg style="left:1385.00px;top:49.50px" width="20.00" height="20.00" viewBox="0 0 20 20"><path d="M2.5,3 H12 L13.5,4.5 V9 M2.5,3 V15 H8 M5,6 H10 M5,8.5 H10 M5,11 H8" fill="none" stroke="#979b9e" stroke-width="1.0" stroke-linejoin="round" stroke-linecap="round"/><path d="M10,12 A3,3 0 0 1 15.5,11 M16,14.5 A3,3 0 0 1 10.5,15.5" fill="none" stroke="#979b9e" stroke-width="1.0" stroke-linejoin="round" stroke-linecap="round"/></svg>
<svg style="left:1417.2px;top:58.1px" width="7.6" height="3.8" viewBox="0 0 7.6 3.8"><polygon points="0,0 7.6,0 3.8,3.8" fill="#9a9a9a"/></svg>
<svg style="left:1435.00px;top:49.50px" width="20.00" height="20.00" viewBox="0 0 20 20"><path d="M2.5,14.5 V10 L6,7 H12 V14.5 Z" fill="none" stroke="#262b30" stroke-width="1.4" stroke-linejoin="round" stroke-linecap="round"/><rect x="8" y="4.5" width="9" height="9" transform="rotate(35 12.5 9)" fill="none" stroke="#2f7de1" stroke-width="1.3"/><path d="M8.5,7 L12,14" stroke="#262b30" stroke-width="1"/></svg>
<svg style="left:1467.2px;top:58.1px" width="7.6" height="3.8" viewBox="0 0 7.6 3.8"><polygon points="0,0 7.6,0 3.8,3.8" fill="#1b1b1b"/></svg>
<svg style="left:1485.00px;top:49.50px" width="20.00" height="20.00" viewBox="0 0 20 20"><path d="M2,4.5 H18 M2,15.5 H18" stroke="#b8b8b8" stroke-width="1.2"/><path d="M3,11 L6,6 M6.5,11 L9.5,6 M10,11 L13,6 M13.5,11 L16.5,6 M3,14 L5,12 M7,14 L9,12 M11,14 L13,12 M15,14 L17,12" stroke="#b8b8b8" stroke-width="1.3"/><path d="M2,9 H18" stroke="#c8c8c8" stroke-width="3"/></svg>
<svg style="left:1517.2px;top:58.1px" width="7.6" height="3.8" viewBox="0 0 7.6 3.8"><polygon points="0,0 7.6,0 3.8,3.8" fill="#9a9a9a"/></svg>
<svg style="left:1533.00px;top:49.50px" width="20.00" height="20.00" viewBox="0 0 20 20"><path d="M2,8 H18 M2.5,6.5 V9.5 M17.5,6.5 V9.5" stroke="#2f7de1" stroke-width="1.2"/><rect x="4" y="11" width="12" height="5.5" fill="none" stroke="#262b30" stroke-width="1.3"/><text x="8.5" y="6.2" font-size="6.5" font-family="Liberation Sans" font-weight="bold" fill="#262b30">1</text></svg>
<svg style="left:1567.2px;top:58.1px" width="7.6" height="3.8" viewBox="0 0 7.6 3.8"><polygon points="0,0 7.6,0 3.8,3.8" fill="#1b1b1b"/></svg>
<svg style="left:1593.00px;top:49.50px" width="20.00" height="20.00" viewBox="0 0 20 20"><path d="M2.5,11 Q5,3 9,3.5 Q10.5,4 11,6" fill="none" stroke="#262b30" stroke-width="1.6" stroke-linecap="round"/><path d="M11.5,8.5 L8.5,17 M11.5,8.5 L15.5,17 M9.7,13.5 H13.5" stroke="#262b30" stroke-width="1.9"/></svg>
<svg style="left:1625.2px;top:58.1px" width="7.6" height="3.8" viewBox="0 0 7.6 3.8"><polygon points="0,0 7.6,0 3.8,3.8" fill="#1b1b1b"/></svg>
<svg style="left:1645.00px;top:49.50px" width="20.00" height="20.00" viewBox="0 0 20 20"><path d="M2.5,11 Q5,3 9,3.5 Q10.5,4 11,6" fill="none" stroke="#262b30" stroke-width="1.6" stroke-linecap="round"/><rect x="9" y="9" width="5" height="5" transform="rotate(45 11.5 11.5)" fill="none" stroke="#e0457a" stroke-width="1.3"/><rect x="11" y="11" width="5" height="5" transform="rotate(45 13.5 13.5)" fill="none" stroke="#3bb0a8" stroke-width="1.3"/><rect x="9" y="12" width="5" height="5" transform="rotate(45 11.5 14.5)" fill="none" stroke="#7b57d6" stroke-width="1.3"/></svg>
<svg style="left:1675.2px;top:58.1px" width="7.6" height="3.8" viewBox="0 0 7.6 3.8"><polygon points="0,0 7.6,0 3.8,3.8" fill="#1b1b1b"/></svg>
<svg style="left:1693.00px;top:49.50px" width="20.00" height="20.00" viewBox="0 0 20 20"><path d="M10.5,4.5 Q13.5,1 16.5,4 M16,1.8 L16.8,4.3 L14.2,4.6" fill="none" stroke="#a8c8ee" stroke-width="1.2"/><rect x="2.5" y="10" width="6.5" height="6.5" fill="none" stroke="#979b9e" stroke-width="1.0" stroke-linejoin="round" stroke-linecap="round"/><path d="M3,16 L8.5,10.5" fill="none" stroke="#979b9e" stroke-width="1.0" stroke-linejoin="round" stroke-linecap="round"/><circle cx="14" cy="10.5" r="2.3" fill="none" stroke="#979b9e" stroke-width="1.0" stroke-linejoin="round" stroke-linecap="round"/><path d="M10.5,16.5 V15 Q10.5,13.5 12,13.5 H16 Q17.5,13.5 17.5,15 V16.5 Z" fill="none" stroke="#979b9e" stroke-width="1.0" stroke-linejoin="round" stroke-linecap="round"/></svg>
<svg style="left:1725.2px;top:58.1px" width="7.6" height="3.8" viewBox="0 0 7.6 3.8"><polygon points="0,0 7.6,0 3.8,3.8" fill="#9a9a9a"/></svg>
<div class="t" style="left:1765px;top:54.01px;font-size:11.8px;color:#111;font-weight:normal;">Zastosuj Profil:</div>
<svg style="left:1851.2px;top:58.1px" width="7.6" height="3.8" viewBox="0 0 7.6 3.8"><polygon points="0,0 7.6,0 3.8,3.8" fill="#1b1b1b"/></svg>
<div class="a" style="left:4.0px;top:92px;width:1px;height:16px;background:#6e6e6e;"></div>
<div class="a" style="left:11px;top:94.5px;width:38.5px;height:19px;background:#fafafa;border:1px solid #d2d2d2;border-radius:4px"></div>
<div class="a" style="left:52.5px;top:94.5px;width:38.5px;height:19px;background:#fafafa;border:1px solid #d2d2d2;border-radius:4px"></div>
<div class="a" style="left:94px;top:94.5px;width:39.5px;height:19px;background:#cce4f7;border:1px solid #9ccaf0;border-radius:4px"></div>
<div class="a" style="left:136.5px;top:86.5px;width:46.5px;height:26.5px;background:#fafafa;border:1px solid #d2d2d2;border-radius:4px"></div>
<svg style="left:14px;top:95px" width="24" height="17" viewBox="14 95 24 17"><rect x="16.2" y="97.5" width="18.6" height="12.1" fill="none" stroke="#262b30" stroke-width="1" stroke-dasharray="1,1"/><path d="M21.5,101.4 H29 M21.5,104.8 L29,101.8" stroke="#262b30" stroke-width="1.2"/><rect x="18.9" y="100" width="3" height="2.9" fill="#262b30"/><rect x="28.5" y="100" width="3" height="2.8" fill="#262b30"/><rect x="18.9" y="103.6" width="3" height="2.9" fill="#262b30"/></svg>
<svg style="left:41.75px;top:100.5px" width="3.5" height="7.0" viewBox="0 0 3.5 7.0"><polygon points="0,0 3.5,3.5 0,7.0" fill="#1b1b1b"/></svg>
<svg style="left:56px;top:95px" width="24" height="17" viewBox="56 95 24 17"><rect x="59.3" y="98.3" width="13.3" height="10.3" fill="none" stroke="#262b30" stroke-width="1.3" stroke-dasharray="2.2,1.5"/><path d="M72.2,97.4 L76.8,100.6 L74.9,101.2 L76.7,103.6 L75.7,104.3 L73.9,101.9 L72.6,103.4 Z" fill="#262b30"/></svg>
<svg style="left:82.75px;top:100.5px" width="3.5" height="7.0" viewBox="0 0 3.5 7.0"><polygon points="0,0 3.5,3.5 0,7.0" fill="#1b1b1b"/></svg>
<svg style="left:103px;top:94px" width="20" height="20" viewBox="0 0 20 20"><g transform="translate(13.2,12.4) rotate(-45)"><path d="M-3.5,-6.6 V0 A3.5,3.5 0 0 0 3.5,0 V-6.6" fill="none" stroke="#262b30" stroke-width="4"/><path d="M-3.5,-6.6 V0 A3.5,3.5 0 0 0 3.5,0 V-6.6" fill="none" stroke="#d3e9fa" stroke-width="1.6"/><circle cx="3.5" cy="-6.4" r="2.1" fill="#262b30"/><circle cx="-3.5" cy="-6.4" r="2.1" fill="#999"/></g></svg>
<svg style="left:150px;top:92px" width="14" height="16" viewBox="0 0 14 16"><path d="M2,1.5 L11,9 L7,9.5 L9,14 L7.3,14.8 L5.3,10.3 L2,13 Z" fill="#8a8a8a" stroke="#262b30" stroke-width="1" stroke-linejoin="round"/></svg>
<svg style="left:175.25px;top:96.0px" width="3.5" height="7.0" viewBox="0 0 3.5 7.0"><polygon points="0,0 3.5,3.5 0,7.0" fill="#1b1b1b"/></svg>
<svg style="left:251px;top:128px" width="19" height="15" viewBox="0 0 19 15"><rect x="0.7" y="0.7" width="7.3" height="5.3" fill="none" stroke="#262b30" stroke-width="1.3"/><rect x="10.7" y="0.7" width="7.3" height="5.3" fill="none" stroke="#262b30" stroke-width="1.3"/><rect x="0.7" y="8.7" width="7.3" height="5.3" fill="none" stroke="#262b30" stroke-width="1.3"/><rect x="10.7" y="8.7" width="7.3" height="5.3" fill="none" stroke="#262b30" stroke-width="1.3"/></svg>
<div class="a" style="left:272.5px;top:124px;width:1px;height:21px;background:#c4c4c4;"></div>
<svg style="left:277px;top:127px" width="18" height="15" viewBox="0 0 18 15"><path d="M1,1 H7 V6.5 H17 V14 H1 Z" fill="#fff" stroke="#2f7de1" stroke-width="1.3" stroke-linejoin="round"/><path d="M3,1 V4.5 L5,2.5" fill="none" stroke="#2f7de1" stroke-width="0.9"/></svg>
<div class="t" style="left:297px;top:129.56px;font-size:11.15px;color:#111;font-weight:normal;">(!) 1. Kondygnacja [1. Kondygnacja]</div>
<div class="a" style="left:573px;top:123px;width:300px;height:23px;background:#ffffff;"></div>
<svg style="left:578px;top:126px" width="16" height="17" viewBox="0 0 16 17"><path d="M1.5,5 L5.5,1.5 H14.5 V11.5 L10.5,15.5 H1.5 Z M1.5,5 H10.5 V15.5 M10.5,5 L14.5,1.5" fill="none" stroke="#262b30" stroke-width="1.1" stroke-linejoin="round"/></svg>
<div class="t" style="left:597px;top:129.18px;font-size:11.6px;color:#111;font-weight:normal;">[3D / Wszystko]</div>
<svg style="left:856px;top:130px" width="9" height="9" viewBox="0 0 9 9"><path d="M1,1 L8,8 M8,1 L1,8" stroke="#111" stroke-width="1.5"/></svg>
<svg style="left:877px;top:127px" width="18" height="15" viewBox="0 0 18 15"><path d="M1.5,6 L9,1 L16.5,6 V14 H1.5 Z" fill="none" stroke="#262b30" stroke-width="1.1" stroke-linejoin="round"/></svg>
<div class="t" style="left:897px;top:129.18px;font-size:11.6px;color:#111;font-weight:normal;">[Elewacja południowa]</div>
<div class="a" style="left:1172px;top:124px;width:1px;height:21px;background:#c4c4c4;"></div>
<svg style="left:1680px;top:128px" width="22" height="14" viewBox="0 0 22 14"><path d="M1.5,9.5 V5 L5,1.5 H8 L12,5 V9.5 Z M5,1.5 L8.5,5 V9.5" fill="none" stroke="#262b30" stroke-width="1.1"/><path d="M14,8 H16 M14,10.5 H16 M17,8 H19.5 M17,10.5 H19.5" stroke="#262b30" stroke-width="1.2"/></svg>
<svg style="left:1709.2px;top:132.6px" width="7.6" height="3.8" viewBox="0 0 7.6 3.8"><polygon points="0,0 7.6,0 3.8,3.8" fill="#1b1b1b"/></svg>
<div class="a" style="left:0;top:123px;width:61px;height:850px;overflow:hidden">
<div class="a" style="left:19px;top:5.0px;width:23px;height:1px;background:#6a6a6a;"></div>
<div class="a" style="left:1px;top:10px;width:59px;height:27px;background:#cce4f7;border:1px solid #9ccaf0;border-radius:4px"></div>
<svg style="left:16px;top:14px" width="16" height="18" viewBox="0 0 16 18"><path d="M2,1.5 L13,11 L8.5,11.5 L10.8,16 L8.8,17 L6.6,12.5 L2,15.5 Z" fill="#8d8d8d" stroke="#262b30" stroke-width="1" stroke-linejoin="round"/></svg>
<div class="t" style="left:46px;top:18.68px;font-size:11.6px;color:#111;font-weight:normal;width:13px;overflow:hidden;padding:3px 0;margin-top:-3px">Strzałka</div>
<svg style="left:14px;top:47px" width="20" height="16" viewBox="0 0 20 16"><rect x="0.7" y="0.7" width="18.5" height="14.5" fill="none" stroke="#262b30" stroke-width="1.2" stroke-dasharray="2.4,1.6"/></svg>
<div class="t" style="left:46px;top:48.18px;font-size:11.6px;color:#111;font-weight:normal;width:13px;overflow:hidden;padding:3px 0;margin-top:-3px">Obszar</div>
<div class="a" style="left:0px;top:73.5px;width:60px;height:19.5px;background:#dcdcdc;border-radius:5px"></div>
<div class="t" style="left:2px;top:76.88px;font-size:11.6px;color:#111;font-weight:normal;">Projekt</div>
<svg style="left:8px;top:97.5px" width="30" height="25" viewBox="0 0 24 20"><path d="M5,4 L19,2 V14 L5,17 Z" fill="none" stroke="#262b30" stroke-width="0.95" stroke-linejoin="round" stroke-linecap="round"/></svg>
<div class="t" style="left:46px;top:104.18px;font-size:11.6px;color:#111;font-weight:normal;width:13px;overflow:hidden;padding:3px 0;margin-top:-3px">Ściana</div>
<svg style="left:8px;top:127.5px" width="30" height="25" viewBox="0 0 24 20"><path d="M2,14 L8,10 L6,8 L13,4 L21,9 L8,17 Z" fill="none" stroke="#262b30" stroke-width="0.95" stroke-linejoin="round" stroke-linecap="round"/></svg>
<div class="t" style="left:46px;top:134.18px;font-size:11.6px;color:#111;font-weight:normal;width:13px;overflow:hidden;padding:3px 0;margin-top:-3px">Strop</div>
<svg style="left:8px;top:157.5px" width="30" height="25" viewBox="0 0 24 20"><path d="M8,4 V16 Q8,18.5 10.5,18.5 Q13,18.5 13,16 V4" fill="none" stroke="#262b30" stroke-width="0.95" stroke-linejoin="round" stroke-linecap="round"/><ellipse cx="10.5" cy="4" rx="2.5" ry="1.3" fill="none" stroke="#262b30" stroke-width="0.95" stroke-linejoin="round" stroke-linecap="round"/></svg>
<div class="t" style="left:46px;top:164.18px;font-size:11.6px;color:#111;font-weight:normal;width:13px;overflow:hidden;padding:3px 0;margin-top:-3px">Słup</div>
<svg style="left:8px;top:187.5px" width="30" height="25" viewBox="0 0 24 20"><path d="M2,4 L19,10 L20,15 L5,9 Z M2,4 L5,9" fill="none" stroke="#262b30" stroke-width="0.95" stroke-linejoin="round" stroke-linecap="round"/></svg>
<div class="t" style="left:46px;top:194.18px;font-size:11.6px;color:#111;font-weight:normal;width:13px;overflow:hidden;padding:3px 0;margin-top:-3px">Belka</div>
<svg style="left:8px;top:217.5px" width="30" height="25" viewBox="0 0 24 20"><path d="M7,4 L16,1.5 V16 L7,18.5 Z" fill="none" stroke="#262b30" stroke-width="0.95" stroke-linejoin="round" stroke-linecap="round"/><path d="M9,11 L11,10.3" stroke="#262b30" stroke-width="1"/></svg>
<div class="t" style="left:46px;top:224.18px;font-size:11.6px;color:#111;font-weight:normal;width:13px;overflow:hidden;padding:3px 0;margin-top:-3px">Dr...</div>
<svg style="left:8px;top:247.5px" width="30" height="25" viewBox="0 0 24 20"><path d="M5,4 L18,2 V15 L5,17 Z M11.5,3 V16 M5,10.5 L18,8.5" fill="none" stroke="#262b30" stroke-width="0.95" stroke-linejoin="round" stroke-linecap="round"/></svg>
<div class="t" style="left:46px;top:254.18px;font-size:11.6px;color:#111;font-weight:normal;width:13px;overflow:hidden;padding:3px 0;margin-top:-3px">Okno</div>
<svg style="left:8px;top:277.5px" width="30" height="25" viewBox="0 0 24 20"><path d="M6.8,2 V16.4 M6.8,2.4 Q6.8,1.6 7.8,1.8 L11.2,2.6 V10 M6.8,10.8 L11.2,9.6 L19.2,11.2 L14.4,12.8 Z M14.4,12.8 V18.8 M19.2,11.2 V15.6" fill="none" stroke="#262b30" stroke-width="0.95" stroke-linejoin="round" stroke-linecap="round"/></svg>
<div class="t" style="left:46px;top:284.18px;font-size:11.6px;color:#111;font-weight:normal;width:13px;overflow:hidden;padding:3px 0;margin-top:-3px">Obiekt</div>
<svg style="left:8px;top:307.5px" width="30" height="25" viewBox="0 0 24 20"><circle cx="11" cy="9" r="4.5" fill="none" stroke="#262b30" stroke-width="0.95" stroke-linejoin="round" stroke-linecap="round"/><path d="M9,13 V16 H13 V13 M9.5,9.5 L10.5,8 L11.5,10 L12.5,8.5 M3,9 H4.5 M17.5,9 H19 M5.5,3.5 L6.5,4.5 M16.5,3.5 L15.5,4.5 M5.5,14.5 L6.5,13.5 M16.5,14.5 L15.5,13.5 M11,1 V2.5" fill="none" stroke="#262b30" stroke-width="0.95" stroke-linejoin="round" stroke-linecap="round"/></svg>
<div class="t" style="left:46px;top:314.18px;font-size:11.6px;color:#111;font-weight:normal;width:13px;overflow:hidden;padding:3px 0;margin-top:-3px">Lampa</div>
<svg style="left:8px;top:337.5px" width="30" height="25" viewBox="0 0 24 20"><path d="M1.5,10.5 L8.5,2.5 H17.5 L22.5,11 L16.5,10.5 L9,16.5 Z M17.5,2.5 L16.5,10.5 M9,16.5 Q5,13 1.5,10.5" fill="none" stroke="#262b30" stroke-width="0.95" stroke-linejoin="round" stroke-linecap="round"/></svg>
<div class="t" style="left:46px;top:344.18px;font-size:11.6px;color:#111;font-weight:normal;width:13px;overflow:hidden;padding:3px 0;margin-top:-3px">Dach</div>
<svg style="left:8px;top:367.5px" width="30" height="25" viewBox="0 0 24 20"><path d="M2,5 Q11,9.5 22,2 L20,14 Q17,10.5 14,11.5 L9,17.5 Z M22,2 L14,11.5" fill="none" stroke="#262b30" stroke-width="0.95" stroke-linejoin="round" stroke-linecap="round"/></svg>
<div class="t" style="left:46px;top:374.18px;font-size:11.6px;color:#111;font-weight:normal;width:13px;overflow:hidden;padding:3px 0;margin-top:-3px">Powłoka</div>
<svg style="left:8px;top:397.5px" width="30" height="25" viewBox="0 0 24 20"><g transform="translate(0.0,0.0)"><path d="M2.5,4.2 L7.5,2 L13,4.8 L8,7 Z M2.5,4.2 V5.8 L8,8.6 V7 M8,8.6 L13,6.4 V4.8" fill="#f0f0f0" stroke="#262b30" stroke-width="0.95" stroke-linejoin="round"/></g><g transform="translate(3.3,3.4)"><path d="M2.5,4.2 L7.5,2 L13,4.8 L8,7 Z M2.5,4.2 V5.8 L8,8.6 V7 M8,8.6 L13,6.4 V4.8" fill="#f0f0f0" stroke="#262b30" stroke-width="0.95" stroke-linejoin="round"/></g><g transform="translate(6.6,6.8)"><path d="M2.5,4.2 L7.5,2 L13,4.8 L8,7 Z M2.5,4.2 V5.8 L8,8.6 V7 M8,8.6 L13,6.4 V4.8" fill="#f0f0f0" stroke="#262b30" stroke-width="0.95" stroke-linejoin="round"/></g></svg>
<div class="t" style="left:46px;top:404.18px;font-size:11.6px;color:#111;font-weight:normal;width:13px;overflow:hidden;padding:3px 0;margin-top:-3px">Schody</div>
<svg style="left:8px;top:427.5px" width="30" height="25" viewBox="0 0 24 20"><path d="M3,8 L21,3 M3,12 L21,7 M3,16 V8 M9,14 V6 M15,12 V4 M21,10 V2" fill="none" stroke="#262b30" stroke-width="0.95" stroke-linejoin="round" stroke-linecap="round"/></svg>
<div class="t" style="left:46px;top:434.18px;font-size:11.6px;color:#111;font-weight:normal;width:13px;overflow:hidden;padding:3px 0;margin-top:-3px">Balustrada</div>
<svg style="left:8px;top:457.5px" width="30" height="25" viewBox="0 0 24 20"><path d="M4,2 L21,1 V15 L4,18 Z M4,7 L21,6 M4,12 L21,10.5 M10,2 V17 M16,1.5 V16" fill="none" stroke="#262b30" stroke-width="0.95" stroke-linejoin="round" stroke-linecap="round"/></svg>
<div class="t" style="left:46px;top:464.18px;font-size:11.6px;color:#111;font-weight:normal;width:13px;overflow:hidden;padding:3px 0;margin-top:-3px">Przegroda</div>
<svg style="left:8px;top:487.5px" width="30" height="25" viewBox="0 0 24 20"><path d="M6,3 L15,1.5 L23,9 L14,11 Z M3,8 L14,6 L23,13 L14,16 Z" fill="none" stroke="#262b30" stroke-width="0.95" stroke-linejoin="round" stroke-linecap="round"/></svg>
<div class="t" style="left:46px;top:494.18px;font-size:11.6px;color:#111;font-weight:normal;width:13px;overflow:hidden;padding:3px 0;margin-top:-3px">Świetlik</div>
<svg style="left:8px;top:517.5px" width="30" height="25" viewBox="0 0 24 20"><path d="M4,2 H20 V13 L10,15 L4,13 Z M10,3 V15 M15,3 V14 M4,8 H20 M4,2 L10,3 L20,2" fill="none" stroke="#262b30" stroke-width="0.95" stroke-linejoin="round" stroke-linecap="round"/></svg>
<div class="t" style="left:46px;top:524.18px;font-size:11.6px;color:#111;font-weight:normal;width:13px;overflow:hidden;padding:3px 0;margin-top:-3px">Okno narożne</div>
<svg style="left:8px;top:547.5px" width="30" height="25" viewBox="0 0 24 20"><path d="M5,4 L18,3 V15 L5,17 Z M9,4 V13 L18,12" fill="none" stroke="#262b30" stroke-width="0.95" stroke-linejoin="round" stroke-linecap="round"/></svg>
<div class="t" style="left:46px;top:554.18px;font-size:11.6px;color:#111;font-weight:normal;width:13px;overflow:hidden;padding:3px 0;margin-top:-3px">Otwór</div>
<svg style="left:8px;top:577.5px" width="30" height="25" viewBox="0 0 24 20"><path d="M5,3.5 L19,1.5 V13 L5,16.5 Z M11,2.5 V15" fill="none" stroke="#262b30" stroke-width="0.95" stroke-linejoin="round" stroke-linecap="round"/></svg>
<div class="t" style="left:46px;top:584.18px;font-size:11.6px;color:#111;font-weight:normal;width:13px;overflow:hidden;padding:3px 0;margin-top:-3px">Zasłona</div>
<svg style="left:8px;top:607.5px" width="30" height="25" viewBox="0 0 24 20"><path d="M1,6 Q8,4 15,5 Q20,10 22,14 L12,17 Q9,12 1,6 M6,9 L17,6.5 M10,13 L20,10 M9,4.5 Q13,9 15,16 M14,4.5 Q17,10 18,15" fill="none" stroke="#262b30" stroke-width="0.95" stroke-linejoin="round" stroke-linecap="round"/></svg>
<div class="t" style="left:46px;top:614.18px;font-size:11.6px;color:#111;font-weight:normal;width:13px;overflow:hidden;padding:3px 0;margin-top:-3px">Siatka</div>
<svg style="left:8px;top:637.5px" width="30" height="25" viewBox="0 0 24 20"><path d="M9,17 Q3,12 6,7 Q9,3 15,2 Q12,6 13,11 Q14,15 16,17 Z M15,2 Q12,9 16,17" fill="none" stroke="#262b30" stroke-width="0.95" stroke-linejoin="round" stroke-linecap="round"/></svg>
<div class="t" style="left:46px;top:644.18px;font-size:11.6px;color:#111;font-weight:normal;width:13px;overflow:hidden;padding:3px 0;margin-top:-3px">Kształt</div>
<svg style="left:8px;top:667.5px" width="30" height="25" viewBox="0 0 24 20"><path d="M3,3 H10 V7 H13 V3 H16 V9 H20 V17 H3 Z M8,12 H14 M8,14 H14" fill="none" stroke="#262b30" stroke-width="0.95" stroke-linejoin="round" stroke-linecap="round"/></svg>
<div class="t" style="left:46px;top:674.18px;font-size:11.6px;color:#111;font-weight:normal;width:13px;overflow:hidden;padding:3px 0;margin-top:-3px">Strefa</div>
<div class="a" style="left:0px;top:699px;width:60px;height:19.5px;background:#dcdcdc;border-radius:5px"></div>
<div class="t" style="left:2px;top:702.68px;font-size:11.6px;color:#111;font-weight:normal;">Okno</div>
<svg style="left:0;top:0;position:absolute" width="61" height="850" viewBox="0 123 61 850"><path d="M10,858.3 H25.8 M25.5,860.5 V862.3 M25,864.4 H36" stroke="#8f9193" stroke-width="1.05"/><path d="M11,856.6 L13.7,853.4 L16.5,856.6 Z M30,862.4 L32.6,859 L35.3,862.4 Z" fill="#8f9193"/><path d="M10,892.5 H36" stroke="#8f9193" stroke-width="1.1"/><path d="M20.2,890.3 L23.5,884.2 L26.8,890.3 Z" fill="#8f9193"/></svg>
<div class="t" style="left:46.3px;top:730.02px;font-size:11.2px;color:#8f9193;font-weight:normal;transform:scaleX(0.8);transform-origin:0 0;-webkit-text-stroke:0">F</div>
<div class="a" style="left:51.5px;top:738px;width:1px;height:16px;background:#ffffff;"></div>
<div class="t" style="left:46.3px;top:760.02px;font-size:11.2px;color:#8f9193;font-weight:normal;transform:scaleX(0.8);transform-origin:0 0;-webkit-text-stroke:0">E</div>
<div class="a" style="left:0px;top:773px;width:60px;height:19.5px;background:#dcdcdc;border-radius:5px"></div>
<div class="t" style="left:2px;top:776.68px;font-size:11.6px;color:#111;font-weight:normal;">Dokument</div>
<svg style="left:0;top:0;position:absolute" width="61" height="850" viewBox="0 123 61 850"><path d="M11,936.3 H34.5 M14.5,933 V940 M31.7,933 V940" stroke="#6b6e70" stroke-width="1.05"/><text x="17.6" y="932" font-size="6.8" font-family="Liberation Sans" font-weight="bold" fill="#8a8c8e">1.2</text></svg>
<div class="t" style="left:46px;top:804.52px;font-size:11.2px;color:#9a9a9a;font-weight:normal;width:6.5px;overflow:hidden;-webkit-text-stroke:0;padding:3px 0;margin-top:-3px">W</div>
<div class="a" style="left:0px;top:829px;width:60px;height:19.5px;background:#dcdcdc;border-radius:5px"></div>
<div class="t" style="left:2px;top:832.18px;font-size:11.6px;color:#111;font-weight:normal;">MEP Design</div>
</div>
<div class="a" style="left:119px;top:128.0px;width:70px;height:1px;background:#666;"></div>
<svg style="left:69px;top:141px" width="20" height="15" viewBox="0 0 20 15"><path d="M1,13.5 V7 L6,1.5 L11,7 V13.5 Z M6,1.5 L14,4 L18.5,8.5 V13.5 H11 M11,7 L18.5,8.5" fill="none" stroke="#262b30" stroke-width="1.2" stroke-linejoin="round"/></svg>
<div class="a" style="left:99.1px;top:138px;width:1px;height:19px;background:#8a8a8a;"></div>
<div class="a" style="left:106px;top:133px;width:30.5px;height:28.5px;background:#cce4f7;border:1px solid #9ccaf0;border-radius:4px"></div>
<svg style="left:111px;top:141px" width="20" height="15" viewBox="0 0 20 15"><rect x="0.8" y="0.8" width="17.5" height="13.2" rx="0.8" fill="none" stroke="#262b30" stroke-width="1.2" stroke-linejoin="round"/><path d="M3,11.5 V7 L6.5,3 L10,7 V11.5 Z M6.5,3 L12,4.5 L15.5,7.5 V11.5 H10 M10,7 L15.5,7.5" fill="none" stroke="#262b30" stroke-width="1.1"/></svg>
<svg style="left:140px;top:137px" width="22" height="20" viewBox="140 137 22 20"><path d="M147.4,148.2 V139.9 L142.5,144.9 V152.2 Q142.5,154.2 144.5,154.2 H158.6 Q159.6,154.2 159.6,153.2 V144.5 Q159.6,143.5 158.6,143.5 H147.4 M147.4,148.2 L143.3,153.4" fill="none" stroke="#262b30" stroke-width="1.05" stroke-linejoin="round"/><path d="M153.4,154.2 V151.3 Q153.4,150.5 154.2,150.5 H159.6 M153.4,152.4 H159.6" fill="none" stroke="#262b30" stroke-width="1.05"/></svg>
<svg style="left:171px;top:138px" width="20" height="20" viewBox="171 138 20 20"><path d="M177.3,154.3 V155.4 Q177.3,156.4 178.3,156.4 H187.6 Q188.6,156.4 188.6,155.4 V146.2 Q188.6,145.2 187.6,145.2 H186.6" fill="none" stroke="#262b30" stroke-width="1.05"/><path d="M175.2,152.2 V153.2 Q175.2,154.3 176.3,154.3 H185.6 Q186.6,154.3 186.6,153.3 V144.1 Q186.6,143.1 185.6,143.1 H184.6" fill="none" stroke="#262b30" stroke-width="1.05"/><rect x="174.3" y="140.2" width="10.3" height="12" rx="1.1" fill="none" stroke="#262b30" stroke-width="1.05"/><rect x="173.4" y="143.3" width="8.2" height="2.3" rx="1.1" fill="#f0f0f0" stroke="#262b30" stroke-width="1.05"/></svg>
<div class="a" style="left:211px;top:137px;width:31.5px;height:21px;background:#fafafa;border:1px solid #d6d6d6;border-radius:5px"></div>
<svg style="left:216px;top:142px" width="15" height="11" viewBox="0 0 15 11"><path d="M1,2 H13 M1,5.5 H13 M1,9 H13" stroke="#262b30" stroke-width="1.2"/></svg>
<svg style="left:235.25px;top:144.0px" width="3.5" height="7.0" viewBox="0 0 3.5 7.0"><polygon points="0,0 3.5,3.5 0,7.0" fill="#1b1b1b"/></svg>
<div class="a" style="left:65px;top:169px;width:178px;height:21.5px;background:#ffffff;border-bottom:1px solid #5a5a5a;border-radius:2px 2px 0 0"></div>
<svg style="left:68px;top:173px" width="14" height="14" viewBox="0 0 14 14"><circle cx="5.8" cy="5.8" r="4.6" fill="none" stroke="#444" stroke-width="1.1"/><path d="M9.2,9.2 L12.5,12.5" stroke="#444" stroke-width="1.2"/></svg>
<div class="t" style="left:87px;top:173.75px;font-size:11.4px;color:#6b6b6b;font-weight:normal;">Przeszukaj Mapę widok...</div>
<div class="a" style="left:62px;top:193px;width:168px;height:354px;background:#ffffff;"></div>
<div class="a" style="left:236.5px;top:210px;width:1.5px;height:175px;background:#8f8f8f;"></div>
<svg style="left:68.5px;top:201.4px" width="10" height="6" viewBox="0 0 10 6"><path d="M1,1 L5,5 L9,1" fill="none" stroke="#262b30" stroke-width="1.4"/></svg>
<svg style="left:83.2px;top:196.9px" width="18" height="14" viewBox="0 0 18 14"><rect x="0.7" y="0.7" width="16.6" height="12.6" rx="1.2" fill="#fff" stroke="#2f7de1" stroke-width="1.3"/><path d="M3,10.8 V7 L6.3,3.2 L9.6,7 V10.8 Z M6.3,3.2 L11.5,4.5 L14.8,7.2 V10.8 H9.6 M9.6,7 L14.8,7.2" fill="none" stroke="#2f7de1" stroke-width="1"/></svg>
<div class="t" style="left:106.6px;top:198.25px;font-size:11.4px;color:#111;font-weight:normal;">animacja test</div>
<svg style="left:93.2px;top:218.9px" width="18" height="15" viewBox="0 0 18 15"><path d="M1,0.8 H7 V5.5 H17 V14 H1 Z" fill="#fff" stroke="#2f7de1" stroke-width="1.3" stroke-linejoin="round"/><path d="M3.3,1 V4 L5.2,1.5" fill="none" stroke="#2f7de1" stroke-width="0.9"/></svg>
<div class="t" style="left:116.6px;top:220.25px;font-size:11.4px;color:#111;font-weight:normal;">Lokalizacja</div>
<svg style="left:78.5px;top:245.4px" width="10" height="6" viewBox="0 0 10 6"><path d="M1,1 L5,5 L9,1" fill="none" stroke="#262b30" stroke-width="1.4"/></svg>
<svg style="left:93.2px;top:240.9px" width="18" height="15" viewBox="0 0 18 15"><path d="M1,0.8 H7 V5.5 H17 V14 H1 Z" fill="#e3f0fc" stroke="#2f7de1" stroke-width="1.3" stroke-linejoin="round"/><path d="M3.3,1 V4 L5.2,1.5" fill="none" stroke="#2f7de1" stroke-width="0.9"/><path d="M0,10 H6 V16 H0 Z" fill="#fff"/><path d="M1.5,16 Q1,12 4.5,11.2" fill="none" stroke="#2d2d2d" stroke-width="1.5"/><path d="M3,9.5 L6.2,10.8 L3.8,13.2 Z" fill="#2d2d2d"/></svg>
<div class="t" style="left:116.6px;top:242.25px;font-size:11.4px;color:#111;font-weight:normal;">Rzuty</div>
<svg style="left:103.2px;top:262.9px" width="18" height="15" viewBox="0 0 18 15"><path d="M1,0.8 H7 V5.5 H17 V14 H1 Z" fill="#fff" stroke="#2f7de1" stroke-width="1.3" stroke-linejoin="round"/><path d="M3.3,1 V4 L5.2,1.5" fill="none" stroke="#2f7de1" stroke-width="0.9"/></svg>
<div class="t" style="left:126.6px;top:264.25px;font-size:11.4px;color:#111;font-weight:normal;">2. Kondygnacja</div>
<svg style="left:103.2px;top:284.9px" width="18" height="15" viewBox="0 0 18 15"><path d="M1,0.8 H7 V5.5 H17 V14 H1 Z" fill="#fff" stroke="#2f7de1" stroke-width="1.3" stroke-linejoin="round"/><path d="M3.3,1 V4 L5.2,1.5" fill="none" stroke="#2f7de1" stroke-width="0.9"/></svg>
<div class="t" style="left:126.6px;top:286.25px;font-size:11.4px;color:#111;font-weight:normal;">1. Kondygnacja</div>
<svg style="left:103.2px;top:306.9px" width="18" height="15" viewBox="0 0 18 15"><path d="M1,0.8 H7 V5.5 H17 V14 H1 Z" fill="#fff" stroke="#2f7de1" stroke-width="1.3" stroke-linejoin="round"/><path d="M3.3,1 V4 L5.2,1.5" fill="none" stroke="#2f7de1" stroke-width="0.9"/></svg>
<div class="t" style="left:126.6px;top:308.25px;font-size:11.4px;color:#111;font-weight:normal;">0. Parter</div>
<svg style="left:78.5px;top:333.4px" width="10" height="6" viewBox="0 0 10 6"><path d="M1,1 L5,5 L9,1" fill="none" stroke="#262b30" stroke-width="1.4"/></svg>
<svg style="left:93.2px;top:328.9px" width="18" height="15" viewBox="0 0 18 15"><path d="M1,0.8 H7 V5.5 H17 V14 H1 Z" fill="#e3f0fc" stroke="#2f7de1" stroke-width="1.3" stroke-linejoin="round"/><path d="M3.3,1 V4 L5.2,1.5" fill="none" stroke="#2f7de1" stroke-width="0.9"/><path d="M0,10 H6 V16 H0 Z" fill="#fff"/><path d="M1.5,16 Q1,12 4.5,11.2" fill="none" stroke="#2d2d2d" stroke-width="1.5"/><path d="M3,9.5 L6.2,10.8 L3.8,13.2 Z" fill="#2d2d2d"/></svg>
<div class="t" style="left:116.6px;top:330.25px;font-size:11.4px;color:#111;font-weight:normal;">Rzuty sufitu</div>
<svg style="left:103.2px;top:350.9px" width="18" height="15" viewBox="0 0 18 15"><path d="M1,0.8 H7 V5.5 H17 V14 H1 Z" fill="#fff" stroke="#2f7de1" stroke-width="1.3" stroke-linejoin="round"/><path d="M3.3,1 V4 L5.2,1.5" fill="none" stroke="#2f7de1" stroke-width="0.9"/></svg>
<div class="t" style="left:126.6px;top:352.25px;font-size:11.4px;color:#111;font-weight:normal;">2. Kondygnacja</div>
<svg style="left:103.2px;top:372.9px" width="18" height="15" viewBox="0 0 18 15"><path d="M1,0.8 H7 V5.5 H17 V14 H1 Z" fill="#fff" stroke="#2f7de1" stroke-width="1.3" stroke-linejoin="round"/><path d="M3.3,1 V4 L5.2,1.5" fill="none" stroke="#2f7de1" stroke-width="0.9"/></svg>
<div class="t" style="left:126.6px;top:374.25px;font-size:11.4px;color:#111;font-weight:normal;">1. Kondygnacja</div>
<svg style="left:103.2px;top:394.9px" width="18" height="15" viewBox="0 0 18 15"><path d="M1,0.8 H7 V5.5 H17 V14 H1 Z" fill="#fff" stroke="#2f7de1" stroke-width="1.3" stroke-linejoin="round"/><path d="M3.3,1 V4 L5.2,1.5" fill="none" stroke="#2f7de1" stroke-width="0.9"/></svg>
<div class="t" style="left:126.6px;top:396.25px;font-size:11.4px;color:#111;font-weight:normal;">0. Parter</div>
<svg style="left:78.5px;top:421.4px" width="10" height="6" viewBox="0 0 10 6"><path d="M1,1 L5,5 L9,1" fill="none" stroke="#262b30" stroke-width="1.4"/></svg>
<svg style="left:93.2px;top:416.9px" width="18" height="15" viewBox="0 0 18 15"><path d="M1,0.8 H7 V5.5 H17 V14 H1 Z" fill="#e3f0fc" stroke="#2f7de1" stroke-width="1.3" stroke-linejoin="round"/><path d="M3.3,1 V4 L5.2,1.5" fill="none" stroke="#2f7de1" stroke-width="0.9"/><path d="M0,10 H6 V16 H0 Z" fill="#fff"/><path d="M1.5,16 Q1,12 4.5,11.2" fill="none" stroke="#2d2d2d" stroke-width="1.5"/><path d="M3,9.5 L6.2,10.8 L3.8,13.2 Z" fill="#2d2d2d"/></svg>
<div class="t" style="left:116.6px;top:418.25px;font-size:11.4px;color:#111;font-weight:normal;">Rzuty konstrukcji</div>
<svg style="left:103.2px;top:438.9px" width="18" height="15" viewBox="0 0 18 15"><path d="M1,0.8 H7 V5.5 H17 V14 H1 Z" fill="#fff" stroke="#2f7de1" stroke-width="1.3" stroke-linejoin="round"/><path d="M3.3,1 V4 L5.2,1.5" fill="none" stroke="#2f7de1" stroke-width="0.9"/></svg>
<div class="t" style="left:126.6px;top:440.25px;font-size:11.4px;color:#111;font-weight:normal;">2. Kondygnacja</div>
<svg style="left:103.2px;top:460.9px" width="18" height="15" viewBox="0 0 18 15"><path d="M1,0.8 H7 V5.5 H17 V14 H1 Z" fill="#fff" stroke="#2f7de1" stroke-width="1.3" stroke-linejoin="round"/><path d="M3.3,1 V4 L5.2,1.5" fill="none" stroke="#2f7de1" stroke-width="0.9"/></svg>
<div class="t" style="left:126.6px;top:462.25px;font-size:11.4px;color:#111;font-weight:normal;">1. Kondygnacja</div>
<svg style="left:103.2px;top:482.9px" width="18" height="15" viewBox="0 0 18 15"><path d="M1,0.8 H7 V5.5 H17 V14 H1 Z" fill="#fff" stroke="#2f7de1" stroke-width="1.3" stroke-linejoin="round"/><path d="M3.3,1 V4 L5.2,1.5" fill="none" stroke="#2f7de1" stroke-width="0.9"/></svg>
<div class="t" style="left:126.6px;top:484.25px;font-size:11.4px;color:#111;font-weight:normal;">0. Parter</div>
<svg style="left:93.2px;top:503.9px" width="18" height="16" viewBox="0 0 18 16"><path d="M2.5,7.5 V14.5 H15.5 V7.5" fill="#e3f0fc" stroke="#2f7de1" stroke-width="1.2"/><path d="M0.8,7.5 L9,2.5 L17.2,7.5 Z" fill="#fff" stroke="#2f7de1" stroke-width="1.2" stroke-linejoin="round"/><path d="M0,10.5 H6 V16 H0 Z" fill="#fff"/><path d="M1.5,16 Q1,12.5 4.5,11.7" fill="none" stroke="#2d2d2d" stroke-width="1.5"/><path d="M3,10 L6.2,11.3 L3.8,13.7 Z" fill="#2d2d2d"/></svg>
<div class="t" style="left:116.6px;top:506.25px;font-size:11.4px;color:#111;font-weight:normal;">Przekroje</div>
<svg style="left:78.5px;top:531.4px" width="10" height="6" viewBox="0 0 10 6"><path d="M1,1 L5,5 L9,1" fill="none" stroke="#262b30" stroke-width="1.4"/></svg>
<svg style="left:93.2px;top:525.9px" width="18" height="16" viewBox="0 0 18 16"><path d="M2.5,7.5 V14.5 H15.5 V7.5" fill="#e3f0fc" stroke="#2f7de1" stroke-width="1.2"/><path d="M0.8,7.5 L9,2.5 L17.2,7.5 Z" fill="#fff" stroke="#2f7de1" stroke-width="1.2" stroke-linejoin="round"/><path d="M0,10.5 H6 V16 H0 Z" fill="#fff"/><path d="M1.5,16 Q1,12.5 4.5,11.7" fill="none" stroke="#2d2d2d" stroke-width="1.5"/><path d="M3,10 L6.2,11.3 L3.8,13.7 Z" fill="#2d2d2d"/></svg>
<div class="t" style="left:116.6px;top:528.25px;font-size:11.4px;color:#111;font-weight:normal;">Elewacje</div>
<div class="a" style="left:79px;top:553.8px;width:77px;height:2px;background:#777;"></div>
<svg style="left:68px;top:567px" width="24" height="22" viewBox="0 0 24 22"><rect x="1" y="8" width="15.5" height="11.5" rx="1" fill="none" stroke="#262b30" stroke-width="1.2" stroke-linejoin="round"/><path d="M4,17 V13 L7,10 L10,13 V17 Z M7,10 L11.5,11 L14,13.5 V17 H10" fill="none" stroke="#262b30" stroke-width="1.1"/><circle cx="17" cy="7.5" r="5.3" fill="#f0f0f0" stroke="#2f7de1" stroke-width="1.2"/><path d="M14,7.5 H20 M17,4.5 V10.5" stroke="#2f7de1" stroke-width="1.2"/></svg>
<svg style="left:99px;top:567px" width="24" height="22" viewBox="0 0 24 22"><rect x="2" y="8" width="15.5" height="11.5" rx="1" fill="none" stroke="#262b30" stroke-width="1.2" stroke-linejoin="round"/><path d="M5,17 V13 L8,10 L11,13 V17 Z M8,10 L12.5,11 L15,13.5 V17 H11" fill="none" stroke="#262b30" stroke-width="1.1"/><path d="M0,16 H5 V22 H0 Z" fill="#f0f0f0"/><path d="M1.2,21.5 Q1,18 4,17.2" fill="none" stroke="#2d2d2d" stroke-width="1.5"/><path d="M2.6,15.8 L5.6,16.9 L3.5,19.2 Z" fill="#2d2d2d"/><circle cx="17" cy="7.5" r="5.3" fill="#f0f0f0" stroke="#2f7de1" stroke-width="1.2"/><path d="M14,7.5 H20 M17,4.5 V10.5" stroke="#2f7de1" stroke-width="1.2"/></svg>
<svg style="left:130px;top:567px" width="24" height="22" viewBox="0 0 24 22"><path d="M1,19.5 V8 H6 L8,10 H15.5 V19.5 Z" fill="none" stroke="#262b30" stroke-width="1.2" stroke-linejoin="round"/><circle cx="16" cy="7.5" r="5.3" fill="#f0f0f0" stroke="#2f7de1" stroke-width="1.2"/><path d="M13,7.5 H19 M16,4.5 V10.5" stroke="#2f7de1" stroke-width="1.2"/></svg>
<svg style="left:162px;top:574px" width="15" height="12" viewBox="0 0 15 12"><rect x="0.6" y="0.6" width="13.5" height="10.5" rx="1" fill="none" stroke="#a9c9f2" stroke-width="1.1"/><path d="M0.6,3 H14" stroke="#a9c9f2" stroke-width="1"/><path d="M3,5.8 H3.8 M5.5,5.8 H11.5 M3,8.3 H3.8 M5.5,8.3 H11.5" stroke="#a9c9f2" stroke-width="1"/></svg>
<svg style="left:192.5px;top:573px" width="14" height="14" viewBox="0 0 14 14"><path d="M1,1 L13,13 M13,1 L1,13" stroke="#f4a898" stroke-width="1.6"/></svg>
<div class="a" style="left:64px;top:597px;width:180px;height:22px;background:#d9d9d9;border-radius:4px"></div>
<svg style="left:71px;top:605.5px" width="8" height="5" viewBox="0 0 8 5"><polygon points="0,0 7.5,0 3.75,4.5" fill="#333"/></svg>
<div class="t" style="left:88.5px;top:602.38px;font-size:11.6px;color:#111;font-weight:normal;">Cechy</div>
<div class="t" style="left:154px;top:626.35px;font-size:11.4px;color:#111;font-weight:normal;transform:translateX(-50%);">Brak zaznaczenia.</div>
<div class="a" style="left:62px;top:729.8px;width:184px;height:1px;background:#d2d2d2;"></div>
<div class="a" style="left:119px;top:734.75px;width:70px;height:1.5px;background:#666;"></div>
<div class="a" style="left:66px;top:748px;width:26px;height:26px;background:#f9f9f9;border-radius:4px"></div>
<svg style="left:69px;top:752px" width="18" height="18" viewBox="0 0 18 18"><rect x="1" y="1" width="14" height="14" rx="1" fill="none" stroke="#8a8a8a" stroke-width="1.2"/><path d="M3.5,12 V3.5 H11" fill="none" stroke="#9a9a9a" stroke-width="1"/><path d="M16.5,4 V17 H4" fill="none" stroke="#a9c9f2" stroke-width="1.2"/></svg>
<div class="a" style="left:95.8px;top:748px;width:146.6px;height:26px;background:#f9f9f9;border-radius:5px"></div>
<svg style="left:235.1px;top:756.7px" width="3.8" height="7.6" viewBox="0 0 3.8 7.6"><polygon points="0,0 3.8,3.8 0,7.6" fill="#9a9a9a"/></svg>
<svg style="left:69px;top:783px" width="20" height="19" viewBox="0 0 20 19"><rect x="1" y="1" width="12" height="10" rx="1" fill="none" stroke="#8a8a8a" stroke-width="1.2"/><rect x="6" y="6" width="11" height="11" rx="1" fill="none" stroke="#a9c9f2" stroke-width="1.2"/><path d="M4,4 L13,13 M4,4 H7.5 M4,4 V7.5 M13,13 H9.5 M13,13 V9.5" fill="none" stroke="#8a8a8a" stroke-width="1.1"/></svg>
<svg style="left:131px;top:783px" width="20" height="20" viewBox="0 0 20 20"><path d="M8,10.5 H1.5 V1 H12 V7" fill="none" stroke="#a9c9f2" stroke-width="1.2"/><path d="M11,8 V18 M6,13 H16 M9.5,9.5 L11,8 L12.5,9.5 M9.5,16.5 L11,18 L12.5,16.5 M7.5,11.5 L6,13 L7.5,14.5 M14.5,11.5 L16,13 L14.5,14.5" fill="none" stroke="#8a8a8a" stroke-width="1.1"/></svg>
<svg style="left:159px;top:783px" width="20" height="20" viewBox="0 0 20 20"><path d="M1.5,5.5 L9,2 L12.5,9.5" fill="none" stroke="#a9c9f2" stroke-width="1.2"/><path d="M1.5,5.5 L5,13 L8,11.5" fill="none" stroke="#a9c9f2" stroke-width="1.2"/><path d="M9,14.5 Q13,14 14,10" fill="none" stroke="#8a8a8a" stroke-width="1.1"/><path d="M12.5,9.5 L14.2,8 L15.5,10.5 M10.5,13 L9,14.6 L10.8,16" fill="none" stroke="#8a8a8a" stroke-width="1"/></svg>
<svg style="left:189px;top:783px" width="20" height="20" viewBox="0 0 20 20"><path d="M1,11 V1 H11 V3" fill="none" stroke="#a9c9f2" stroke-width="1.2"/><path d="M1,11 H5 M6,6 H16 V17 H6 Z" fill="none" stroke="#a9c9f2" stroke-width="1.2"/><path d="M13,12.5 Q13,7.5 8.5,7 M10,5.3 L8.2,7 L10,8.7" fill="none" stroke="#8a8a8a" stroke-width="1.1"/></svg>
<svg style="left:221px;top:785px" width="17" height="17" viewBox="0 0 17 17"><circle cx="8" cy="8" r="7.2" fill="none" stroke="#a0a0a0" stroke-width="1.1"/><path d="M4,7 A4,4 0 0 1 11.5,5.5 M12,9 A4,4 0 0 1 4.5,10.5" fill="none" stroke="#a0a0a0" stroke-width="1.1"/><path d="M10.5,3.8 L12.5,5.8 L10,6.5 Z M5.5,12.2 L3.5,10.2 L6,9.5 Z" fill="#a0a0a0"/></svg>
<div class="a" style="left:62px;top:813.1px;width:183px;height:1px;background:#ababab;"></div>
<div class="t" style="left:64px;top:822.98px;font-size:11.6px;color:#7a7a7a;font-weight:normal;">Podrys:</div>
<div class="a" style="left:65.7px;top:841.7px;width:26.7px;height:26px;background:#f9f9f9;border-radius:4px"></div>
<div class="a" style="left:70px;top:849px;width:12px;height:11.5px;background:#e3e1cc;"></div>
<svg style="left:85.1px;top:850.7px" width="3.8" height="7.6" viewBox="0 0 3.8 7.6"><polygon points="0,0 3.8,3.8 0,7.6" fill="#9a9a9a"/></svg>
<div class="a" style="left:103.2px;top:849.8px;width:117.3px;height:4.5px;background:#e6e6e6;border:1px solid #cfcfcf;border-radius:2px"></div>
<svg style="left:214px;top:846.8px" width="8" height="11" viewBox="0 0 8 11"><path d="M0.5,1.5 Q0.5,0.5 1.5,0.5 H6.5 Q7.5,0.5 7.5,1.5 V7 L4,10.5 L0.5,7 Z" fill="#c3c3c3"/></svg>
<div class="a" style="left:105.9px;top:861.3px;width:1px;height:3px;background:#9a9a9a;"></div>
<div class="a" style="left:117.0px;top:861.3px;width:1px;height:3px;background:#9a9a9a;"></div>
<div class="a" style="left:128.0px;top:861.3px;width:1px;height:3px;background:#9a9a9a;"></div>
<div class="a" style="left:140.0px;top:861.3px;width:1px;height:3px;background:#9a9a9a;"></div>
<div class="a" style="left:150.0px;top:861.3px;width:1px;height:3px;background:#9a9a9a;"></div>
<div class="a" style="left:162.0px;top:861.3px;width:1px;height:3px;background:#9a9a9a;"></div>
<div class="a" style="left:173.0px;top:861.3px;width:1px;height:3px;background:#9a9a9a;"></div>
<div class="a" style="left:184.0px;top:861.3px;width:1px;height:3px;background:#9a9a9a;"></div>
<div class="a" style="left:195.0px;top:861.3px;width:1px;height:3px;background:#9a9a9a;"></div>
<div class="a" style="left:206.0px;top:861.3px;width:1px;height:3px;background:#9a9a9a;"></div>
<div class="a" style="left:217.0px;top:861.3px;width:1px;height:3px;background:#9a9a9a;"></div>
<div class="a" style="left:231px;top:842px;width:11px;height:26px;background:#f9f9f9;border-radius:4px"></div>
<svg style="left:235.1px;top:850.7px" width="3.8" height="7.6" viewBox="0 0 3.8 7.6"><polygon points="0,0 3.8,3.8 0,7.6" fill="#9a9a9a"/></svg>
<div class="t" style="left:64px;top:876.18px;font-size:11.6px;color:#7a7a7a;font-weight:normal;">Aktywny Widok:</div>
<div class="a" style="left:65.7px;top:895px;width:26.7px;height:26px;background:#f9f9f9;border-radius:4px"></div>
<svg style="left:69px;top:901px" width="13" height="13" viewBox="0 0 13 13"><path d="M6.5,6.5 V0.3 A6.2,6.2 0 0 1 11.9,9.6 Z" fill="#f2a28f"/><path d="M6.5,6.5 L11.9,9.6 A6.2,6.2 0 0 1 1.1,9.6 Z" fill="#9ec3f4"/><path d="M6.5,6.5 L1.1,9.6 A6.2,6.2 0 0 1 6.5,0.3 Z" fill="#8fd0a0"/><circle cx="6.5" cy="6.5" r="6.2" fill="none" stroke="#999" stroke-width="0.8"/><path d="M6.5,6.5 V0.3 M6.5,6.5 L11.9,9.6 M6.5,6.5 L1.1,9.6" stroke="#999" stroke-width="0.8"/></svg>
<svg style="left:85.1px;top:903.7px" width="3.8" height="7.6" viewBox="0 0 3.8 7.6"><polygon points="0,0 3.8,3.8 0,7.6" fill="#9a9a9a"/></svg>
<div class="a" style="left:103.2px;top:903px;width:117.3px;height:4.5px;background:#e6e6e6;border:1px solid #cfcfcf;border-radius:2px"></div>
<svg style="left:214px;top:900px" width="8" height="11" viewBox="0 0 8 11"><path d="M0.5,1.5 Q0.5,0.5 1.5,0.5 H6.5 Q7.5,0.5 7.5,1.5 V7 L4,10.5 L0.5,7 Z" fill="#c3c3c3"/></svg>
<div class="a" style="left:105.9px;top:914.5px;width:1px;height:3px;background:#9a9a9a;"></div>
<div class="a" style="left:117.0px;top:914.5px;width:1px;height:3px;background:#9a9a9a;"></div>
<div class="a" style="left:128.0px;top:914.5px;width:1px;height:3px;background:#9a9a9a;"></div>
<div class="a" style="left:140.0px;top:914.5px;width:1px;height:3px;background:#9a9a9a;"></div>
<div class="a" style="left:150.0px;top:914.5px;width:1px;height:3px;background:#9a9a9a;"></div>
<div class="a" style="left:162.0px;top:914.5px;width:1px;height:3px;background:#9a9a9a;"></div>
<div class="a" style="left:173.0px;top:914.5px;width:1px;height:3px;background:#9a9a9a;"></div>
<div class="a" style="left:184.0px;top:914.5px;width:1px;height:3px;background:#9a9a9a;"></div>
<div class="a" style="left:195.0px;top:914.5px;width:1px;height:3px;background:#9a9a9a;"></div>
<div class="a" style="left:206.0px;top:914.5px;width:1px;height:3px;background:#9a9a9a;"></div>
<div class="a" style="left:217.0px;top:914.5px;width:1px;height:3px;background:#9a9a9a;"></div>
<div class="a" style="left:62px;top:927.8px;width:183px;height:1px;background:#8a8a8a;"></div>
<svg style="left:99px;top:940px" width="20" height="19" viewBox="0 0 20 19"><path d="M6,11 H1 V1 H12 V6" fill="none" stroke="#a9c9f2" stroke-width="1.2"/><path d="M8,18 L5,13.5 Q4.5,12.5 5.5,12.3 L8,14 V7.5 Q8,6.5 9,6.5 Q10,6.5 10,7.5 V11 V6.5 Q10,5.5 11,5.5 Q12,5.5 12,6.5 V11 V7 Q12,6 13,6 Q14,6 14,7 V11.5 V8.5 Q14,7.5 15,7.5 Q16,7.5 16,8.5 V13 Q16,16 15,18" fill="none" stroke="#9a9a9a" stroke-width="1"/></svg>
<svg style="left:130px;top:941px" width="18" height="17" viewBox="0 0 18 17"><rect x="1" y="1" width="10" height="9.5" rx="1" fill="none" stroke="#9a9a9a" stroke-width="1.1"/><rect x="5.5" y="5.5" width="11" height="10.5" rx="1" fill="#f0f0f0" stroke="#a9c9f2" stroke-width="1.2"/><path d="M11,5.5 V10.5 H8" fill="none" stroke="#9a9a9a" stroke-width="1"/></svg>
<svg style="left:160px;top:940px" width="18" height="19" viewBox="0 0 18 19"><path d="M8.5,1 V18" stroke="#9a9a9a" stroke-width="1.1"/><path d="M7,3.5 H1 V14.5 H7" fill="none" stroke="#9a9a9a" stroke-width="1.1"/><path d="M10,3.5 H16.5 V14.5 H10" fill="none" stroke="#a9c9f2" stroke-width="1.2"/><path d="M6,7 L4,9 L6,11 M11,7 L13,9 L11,11" fill="none" stroke="#9a9a9a" stroke-width="0.9"/></svg>
<svg style="left:190px;top:940px" width="18" height="19" viewBox="0 0 18 19"><rect x="1" y="1" width="11.5" height="10" fill="none" stroke="#9a9a9a" stroke-width="1.1"/><path d="M2,8 L8,2 M4,10 L11,3 M7,10.5 L12,5.5" stroke="#9a9a9a" stroke-width="0.8"/><path d="M4,14 Q10,9 16,13 Q10,18 4,14 Z M3,18 L16,10" fill="none" stroke="#9a9a9a" stroke-width="1.1"/></svg>
<div class="a" style="left:1718px;top:123px;width:2px;height:850px;background:#dcdcdc;"></div>
<div class="a" style="left:1785px;top:128.0px;width:71px;height:1px;background:#666;"></div>
<div class="t" style="left:1723.3px;top:141.02px;font-size:11.55px;color:#111;font-weight:normal;">Domyślna wersja: Model głów...</div>
<div class="a" style="left:1889.8px;top:136.6px;width:26.6px;height:20px;background:#fafafa;border:1px solid #d6d6d6;border-radius:5px"></div>
<svg style="left:1894px;top:138px" width="20" height="17" viewBox="0 0 20 17"><path d="M1.5,14 V5.5 L5.5,1.5 L9.5,5.5 M3.5,14 V6.5 L6,4 H12.5 L14.5,6 V9" fill="none" stroke="#262b30" stroke-width="1.1" stroke-linejoin="round"/><rect x="8.5" y="9" width="10" height="7.5" rx="1" fill="#fff" stroke="#2f7de1" stroke-width="1.2"/><path d="M10.5,11.8 H11.2 M12.5,11.8 H17 M10.5,14 H11.2 M12.5,14 H17" stroke="#2f7de1" stroke-width="1"/></svg>
<div class="a" style="left:1724px;top:160.8px;width:193px;height:22px;background:#ffffff;border-bottom:1px solid #5a5a5a;border-radius:2px 2px 0 0"></div>
<svg style="left:1728px;top:165px" width="14" height="14" viewBox="0 0 14 14"><circle cx="5.8" cy="5.8" r="4.6" fill="none" stroke="#444" stroke-width="1.1"/><path d="M9.2,9.2 L12.5,12.5" stroke="#444" stroke-width="1.2"/></svg>
<div class="t" style="left:1746.5px;top:166.27px;font-size:11.5px;color:#6b6b6b;font-weight:normal;">Szukaj wersji</div>
<div class="a" style="left:1721px;top:187px;width:199px;height:25px;background:#0778d6;"></div>
<svg style="left:1722px;top:190px" width="48" height="20" viewBox="1722 190 48 20"><g transform="rotate(-43.5 1732.3 200)"><path d="M1722.8,200 L1726.2,198.3 H1741.8 Q1742.8,198.3 1742.8,199.3 V200.7 Q1742.8,201.7 1741.8,201.7 H1726.2 Z" fill="#fff" stroke="#1e1e1e" stroke-width="0.9" stroke-linejoin="round"/><path d="M1726.6,198.3 V201.7 M1739.3,198.3 V201.7" stroke="#1e1e1e" stroke-width="0.9"/><path d="M1722.8,200 L1724.4,199.2 V200.8 Z" fill="#1e1e1e"/></g><path d="M1750,203.6 V197.5 L1754.5,193.9 L1758.5,197.5 V203.6 Z" fill="#fff" stroke="#1e1e1e" stroke-width="0.9" stroke-linejoin="round"/><path d="M1754.5,193.9 L1761,195.4 L1764,198.5 V203.6 H1758.5 V197.5 H1764" fill="#fff" stroke="#1e1e1e" stroke-width="0.9" stroke-linejoin="round"/></svg>
<div class="t" style="left:1773.5px;top:194.43px;font-size:11.3px;color:#ffffff;font-weight:bold;">(model główny)</div>
<div class="a" style="left:1721px;top:212px;width:183px;height:548px;background:#ffffff;"></div>
<svg style="left:1907px;top:216px" width="10" height="7" viewBox="0 0 10 7"><polygon points="0,6 5,0.5 10,6" fill="#a8a8a8"/></svg>
<svg style="left:1907px;top:749px" width="10" height="7" viewBox="0 0 10 7"><polygon points="0,0.5 10,0.5 5,6" fill="#a8a8a8"/></svg>
<svg style="left:1730px;top:769px" width="16" height="16" viewBox="0 0 16 16"><circle cx="8" cy="8" r="6.5" fill="none" stroke="#2f7de1" stroke-width="1.2"/><path d="M4.5,8 H11.5 M8,4.5 V11.5" stroke="#2f7de1" stroke-width="1.2"/></svg>
<svg style="left:1757px;top:765px" width="22" height="20" viewBox="0 0 22 20"><path d="M1,18.5 V8.5 H6 L7.5,10 H15 V18.5 Z" fill="none" stroke="#262b30" stroke-width="1.2" stroke-linejoin="round"/><circle cx="15" cy="6" r="5" fill="#f0f0f0" stroke="#2f7de1" stroke-width="1.2"/><path d="M12,6 H18 M15,3 V9" stroke="#2f7de1" stroke-width="1.2"/></svg>
<svg style="left:1789px;top:769px" width="17" height="17" viewBox="0 0 17 17"><rect x="1" y="4" width="11" height="11" rx="1" fill="none" stroke="#b0b0b0" stroke-width="1.1"/><rect x="4" y="1" width="11" height="11" rx="1" fill="#f0f0f0" stroke="#a9c9f2" stroke-width="1.1"/><path d="M6.5,6.5 H12.5 M9.5,3.5 V9.5" stroke="#a9c9f2" stroke-width="1.1"/></svg>
<svg style="left:1818px;top:767px" width="20" height="18" viewBox="0 0 20 18"><path d="M1,16 L5.5,4 L10,16 M2.8,11.5 H8.2" fill="none" stroke="#b0b0b0" stroke-width="1.1"/><path d="M12,1.5 H16 M14,1.5 V10 M12,10 H16" fill="none" stroke="#b0b0b0" stroke-width="1"/></svg>
<svg style="left:1851px;top:770px" width="14" height="14" viewBox="0 0 14 14"><path d="M1,1 L13,13 M13,1 L1,13" stroke="#f4a898" stroke-width="1.6"/></svg>
<svg style="left:1893px;top:768px" width="18" height="17" viewBox="0 0 18 17"><path d="M2,15 L3,11 L12,2 Q13,1 14,2 L15,3 Q16,4 15,5 L6,14 Z M11,3 L14,6" fill="none" stroke="#b0b0b0" stroke-width="1.1" stroke-linejoin="round"/></svg>
<div class="a" style="left:1721px;top:796.2px;width:199px;height:1px;background:#a5a5a5;"></div>
<div class="t" style="left:1723px;top:806.27px;font-size:11.5px;color:#111;font-weight:normal;">Zaznaczone: 0 Modyfikowalne: 0</div>
<div class="a" style="left:1725px;top:826px;width:191px;height:20px;background:#f7f7f7;border:1px solid #e6e6e6;border-radius:4px"></div>
<svg style="left:1794px;top:831px" width="17" height="10" viewBox="0 0 17 10"><rect x="1" y="1" width="9" height="5.5" rx="2.5" fill="none" stroke="#9a9a9a" stroke-width="1.1"/><rect x="6" y="3.5" width="9" height="5.5" rx="2.5" fill="none" stroke="#9a9a9a" stroke-width="1.1"/></svg>
<div class="t" style="left:1816px;top:831.27px;font-size:11.5px;color:#8a8a8a;font-weight:normal;">Połącz</div>
<div class="a" style="left:1723px;top:853px;width:195px;height:22px;background:#d9d9d9;border-radius:4px"></div>
<svg style="left:1730px;top:861.5px" width="8" height="5" viewBox="0 0 8 5"><polygon points="0,0 7.5,0 3.75,4.5" fill="#333"/></svg>
<div class="t" style="left:1747px;top:858.77px;font-size:11.5px;color:#111;font-weight:normal;">Edycja ukierunkowana</div>
<div class="a" style="left:1723.2px;top:889px;width:13px;height:13px;background:#ffffff;border:1px solid #555;border-radius:2.5px"></div>
<div class="t" style="left:1739px;top:890.77px;font-size:11.5px;color:#111;font-weight:normal;">Edytuj tylko domyślną wersję</div>
<div class="a" style="left:1723.2px;top:922px;width:13px;height:13px;background:#0b5fc4;border-radius:2.5px"></div>
<svg style="left:1725px;top:924px" width="9" height="9" viewBox="0 0 9 9"><path d="M1.5,4.5 L3.7,6.8 L7.8,2" fill="none" stroke="#fff" stroke-width="1.1"/></svg>
<div class="t" style="left:1739px;top:923.77px;font-size:11.5px;color:#111;font-weight:normal;">Zanikanie kontekstu</div>
<div class="a" style="left:1725px;top:948px;width:26px;height:20px;background:#fafafa;border:1px solid #d6d6d6;border-radius:5px"></div>
<div class="a" style="left:1729px;top:953px;width:11px;height:10px;background:#b9b9b9;"></div>
<svg style="left:1743.75px;top:954.5px" width="3.5" height="7.0" viewBox="0 0 3.5 7.0"><polygon points="0,0 3.5,3.5 0,7.0" fill="#1b1b1b"/></svg>
<div class="a" style="left:1762px;top:954.5px;width:149px;height:4px;background:#e6e6e6;border:1px solid #d3d3d3;border-radius:2px"></div>
<svg style="left:1832px;top:949px" width="10" height="14" viewBox="0 0 10 14"><path d="M0.5,1.5 Q0.5,0.5 1.5,0.5 H8.5 Q9.5,0.5 9.5,1.5 V9 L5,13.5 L0.5,9 Z" fill="#0b74d4"/></svg>
<div class="a" style="left:1766.0px;top:965px;width:1px;height:3px;background:#9a9a9a;"></div>
<div class="a" style="left:1780.0px;top:965px;width:1px;height:3px;background:#9a9a9a;"></div>
<div class="a" style="left:1794.0px;top:965px;width:1px;height:3px;background:#9a9a9a;"></div>
<div class="a" style="left:1808.0px;top:965px;width:1px;height:3px;background:#9a9a9a;"></div>
<div class="a" style="left:1822.0px;top:965px;width:1px;height:3px;background:#9a9a9a;"></div>
<div class="a" style="left:1836.0px;top:965px;width:1px;height:3px;background:#9a9a9a;"></div>
<div class="a" style="left:1850.0px;top:965px;width:1px;height:3px;background:#9a9a9a;"></div>
<div class="a" style="left:1864.0px;top:965px;width:1px;height:3px;background:#9a9a9a;"></div>
<div class="a" style="left:1878.0px;top:965px;width:1px;height:3px;background:#9a9a9a;"></div>
<div class="a" style="left:1892.0px;top:965px;width:1px;height:3px;background:#9a9a9a;"></div>
<div class="a" style="left:1906.0px;top:965px;width:1px;height:3px;background:#9a9a9a;"></div>
<div class="a" style="left:1920.0px;top:965px;width:1px;height:3px;background:#9a9a9a;"></div>
<div class="a" style="left:967.2px;top:146px;width:31.4px;height:16.5px;background:#dcdfe0;border-radius:0 0 4px 4px"></div>
<div class="a" style="left:967.2px;top:936px;width:31.4px;height:16.7px;background:#dcdfe0;border-radius:4px 4px 0 0"></div>
<div class="a" style="left:247.5px;top:533.3px;width:15.8px;height:31.1px;background:#dcdfe0;border-radius:0 4px 4px 0"></div>
<div class="a" style="left:1703.3px;top:533.3px;width:15.9px;height:31.1px;background:#dcdfe0;border-radius:4px 0 0 4px"></div>
<div class="a" style="left:970px;top:154.6px;width:5.2px;height:1.8px;background:#ff8a1c;border-radius:1px"></div>
<div class="a" style="left:970px;top:942.6px;width:5.2px;height:1.8px;background:#ff8a1c;border-radius:1px"></div>
<div class="a" style="left:977px;top:154.6px;width:5.2px;height:1.8px;background:#ff8a1c;border-radius:1px"></div>
<div class="a" style="left:977px;top:942.6px;width:5.2px;height:1.8px;background:#ff8a1c;border-radius:1px"></div>
<div class="a" style="left:984px;top:154.6px;width:5.2px;height:1.8px;background:#ff8a1c;border-radius:1px"></div>
<div class="a" style="left:984px;top:942.6px;width:5.2px;height:1.8px;background:#ff8a1c;border-radius:1px"></div>
<div class="a" style="left:991px;top:154.6px;width:5.2px;height:1.8px;background:#ff8a1c;border-radius:1px"></div>
<div class="a" style="left:991px;top:942.6px;width:5.2px;height:1.8px;background:#ff8a1c;border-radius:1px"></div>
<div class="a" style="left:255.6px;top:536px;width:1.8px;height:5.2px;background:#ff8a1c;border-radius:1px"></div>
<div class="a" style="left:1709.6px;top:536px;width:1.8px;height:5.2px;background:#ff8a1c;border-radius:1px"></div>
<div class="a" style="left:255.6px;top:543px;width:1.8px;height:5.2px;background:#ff8a1c;border-radius:1px"></div>
<div class="a" style="left:1709.6px;top:543px;width:1.8px;height:5.2px;background:#ff8a1c;border-radius:1px"></div>
<div class="a" style="left:255.6px;top:550px;width:1.8px;height:5.2px;background:#ff8a1c;border-radius:1px"></div>
<div class="a" style="left:1709.6px;top:550px;width:1.8px;height:5.2px;background:#ff8a1c;border-radius:1px"></div>
<div class="a" style="left:255.6px;top:557px;width:1.8px;height:5.2px;background:#ff8a1c;border-radius:1px"></div>
<div class="a" style="left:1709.6px;top:557px;width:1.8px;height:5.2px;background:#ff8a1c;border-radius:1px"></div>
<div class="a" style="left:1653.8px;top:882.5px;width:42.5px;height:42.5px;background:#f1f2f2;border:1px solid #dfe2e4;border-radius:7px"></div>
<svg style="left:1660px;top:890px" width="30" height="30" viewBox="1660 890 30 30"><circle cx="1674.8" cy="904" r="11.8" fill="#ffffff"/><path d="M1674.8,896.6 Q1675.6,903.2 1682.2,904 Q1675.6,904.8 1674.8,911.4 Q1674,904.8 1667.4,904 Q1674,903.2 1674.8,896.6 Z" fill="none" stroke="#111" stroke-width="1.7" stroke-linejoin="round"/></svg>
<div class="a" style="left:246px;top:953px;width:1px;height:19px;background:#d0d0d0;"></div>
<div class="a" style="left:318.2px;top:953px;width:1px;height:19px;background:#6e6e6e;"></div>
<div class="a" style="left:369.1px;top:953px;width:1px;height:19px;background:#6e6e6e;"></div>
<div class="a" style="left:491.5px;top:953px;width:1px;height:19px;background:#6e6e6e;"></div>
<div class="a" style="left:615.0px;top:953px;width:1px;height:19px;background:#6e6e6e;"></div>
<div class="a" style="left:738.5px;top:953px;width:1px;height:19px;background:#6e6e6e;"></div>
<div class="a" style="left:861.0px;top:953px;width:1px;height:19px;background:#6e6e6e;"></div>
<div class="a" style="left:984.5px;top:953px;width:1px;height:19px;background:#6e6e6e;"></div>
<div class="a" style="left:1107.0px;top:953px;width:1px;height:19px;background:#6e6e6e;"></div>
<div class="a" style="left:1230.0px;top:953px;width:1px;height:19px;background:#6e6e6e;"></div>
<div class="a" style="left:1353.0px;top:953px;width:1px;height:19px;background:#6e6e6e;"></div>
<div class="a" style="left:1476.5px;top:953px;width:1px;height:19px;background:#6e6e6e;"></div>
<div class="a" style="left:1599.5px;top:953px;width:1px;height:19px;background:#6e6e6e;"></div>
<div class="a" style="left:247px;top:972.0px;width:1473px;height:1px;background:#d9d9d9;"></div>
<svg style="left:248.00px;top:952.50px" width="20.00" height="20.00" viewBox="0 0 20 20"><circle cx="11" cy="9" r="6" fill="none" stroke="#262b30" stroke-width="1.3" stroke-linecap="round" stroke-linejoin="round"/><path d="M2,9 H8 M4,7 L2,9 L4,11 M7,14 L3.5,17.5" fill="none" stroke="#262b30" stroke-width="1.3" stroke-linecap="round" stroke-linejoin="round"/></svg>
<svg style="left:271.00px;top:952.50px" width="20.00" height="20.00" viewBox="0 0 20 20"><circle cx="9" cy="9" r="6" fill="none" stroke="#b0b0b0" stroke-width="1.2" stroke-linecap="round" stroke-linejoin="round"/><path d="M12,9 H18 M16,7 L18,9 L16,11 M13,14 L16.5,17.5" fill="none" stroke="#b0b0b0" stroke-width="1.2" stroke-linecap="round" stroke-linejoin="round"/></svg>
<svg style="left:294.00px;top:952.50px" width="20.00" height="20.00" viewBox="0 0 20 20"><circle cx="9" cy="9" r="6.5" fill="none" stroke="#262b30" stroke-width="1.3" stroke-linecap="round" stroke-linejoin="round"/><path d="M6,9 H12 M9,6 V12 M13.5,13.5 L17.5,17.5" fill="none" stroke="#262b30" stroke-width="1.3" stroke-linecap="round" stroke-linejoin="round"/></svg>
<svg style="left:322.00px;top:952.50px" width="20.00" height="20.00" viewBox="0 0 20 20"><path d="M9,14 Q2,13.5 2.5,9 Q3,5 10,5 Q17,5 17.5,9 Q17.5,13 12,13.5 M12,11 L10,13.5 L12,16" fill="none" stroke="#262b30" stroke-width="1.3" stroke-linecap="round" stroke-linejoin="round"/></svg>
<svg style="left:345.00px;top:952.50px" width="20.00" height="20.00" viewBox="0 0 20 20"><circle cx="10" cy="3.5" r="1.5" fill="#b8b8b8"/><path d="M10,6 L8,11 L6,17 M8.5,10 L12,17 M6,9.5 L10,7 L13,10" fill="none" stroke="#b8b8b8" stroke-width="1.2"/></svg>
<svg style="left:373.00px;top:952.50px" width="20.00" height="20.00" viewBox="0 0 20 20"><circle cx="9" cy="9" r="7" fill="none" stroke="#262b30" stroke-width="1.3" stroke-linecap="round" stroke-linejoin="round"/><path d="M14,14 L18,18" fill="none" stroke="#262b30" stroke-width="1.3" stroke-linecap="round" stroke-linejoin="round"/><path d="M9,3.5 L7.5,5.5 H10.5 Z M9,14.5 L7.5,12.5 H10.5 Z M3.5,9 L5.5,7.5 V10.5 Z M14.5,9 L12.5,7.5 V10.5 Z" fill="#262b30"/></svg>
<div class="t" style="left:439px;top:957.37px;font-size:11.5px;color:#8c8c8c;font-weight:normal;transform:translateX(-50%);">N/D</div>
<svg style="left:481.1px;top:958.7px" width="3.8" height="7.6" viewBox="0 0 3.8 7.6"><polygon points="0,0 3.8,3.8 0,7.6" fill="#a8a8a8"/></svg>
<svg style="left:496.00px;top:952.50px" width="20.00" height="20.00" viewBox="0 0 20 20"><path d="M3,8 L8,3 L14,9 L9,14 Z M11,13 Q13,17 16,14 M14,12.5 L16,14 L14.5,16" fill="none" stroke="#b8b8b8" stroke-width="1.2"/></svg>
<div class="t" style="left:562px;top:957.37px;font-size:11.5px;color:#8c8c8c;font-weight:normal;transform:translateX(-50%);">N/D</div>
<svg style="left:604.1px;top:958.7px" width="3.8" height="7.6" viewBox="0 0 3.8 7.6"><polygon points="0,0 3.8,3.8 0,7.6" fill="#a8a8a8"/></svg>
<svg style="left:620.00px;top:952.50px" width="20.00" height="20.00" viewBox="0 0 20 20"><rect x="2" y="6.5" width="15.5" height="7" fill="none" stroke="#262b30" stroke-width="1.4"/><path d="M5,6.5 V9.5 M8,6.5 V9 M11,6.5 V9.5 M14,6.5 V9" stroke="#262b30" stroke-width="1.2"/></svg>
<div class="t" style="left:686px;top:957.37px;font-size:11.5px;color:#111;font-weight:normal;transform:translateX(-50%);">1:100</div>
<svg style="left:727.1px;top:958.7px" width="3.8" height="7.6" viewBox="0 0 3.8 7.6"><polygon points="0,0 3.8,3.8 0,7.6" fill="#1b1b1b"/></svg>
<svg style="left:742.00px;top:952.50px" width="20.00" height="20.00" viewBox="0 0 20 20"><path d="M3,7 L9,3.5 H17 L11,7 Z M3,10 L9,6.5 M3,13 L9,9.5 H17 M3,16 L9,12.5 H17 M3,7 V16 M11,7 H3 M3,10 H11 L17,6.5 M3,13 H11 L17,9.5 M3,16 H11 L17,12.5" fill="none" stroke="#262b30" stroke-width="1.1"/></svg>
<div class="t" style="left:771px;top:958.38px;font-size:10.3px;color:#111;font-weight:normal;">WIZUALIZACJA</div>
<svg style="left:849.1px;top:958.7px" width="3.8" height="7.6" viewBox="0 0 3.8 7.6"><polygon points="0,0 3.8,3.8 0,7.6" fill="#1b1b1b"/></svg>
<svg style="left:865.00px;top:952.50px" width="20.00" height="20.00" viewBox="0 0 20 20"><rect x="2.5" y="4" width="15" height="12" fill="none" stroke="#262b30" stroke-width="1.3"/><path d="M2.5,8 H17.5 M5,4 L3.5,8 M9,4 L7.5,8 M13,4 L11.5,8 M17,4 L15.5,8 M4,12 H16" stroke="#262b30" stroke-width="1.1"/></svg>
<div class="t" style="left:903px;top:957.62px;font-size:11.2px;color:#111;font-weight:normal;">Cały model</div>
<svg style="left:972.1px;top:958.7px" width="3.8" height="7.6" viewBox="0 0 3.8 7.6"><polygon points="0,0 3.8,3.8 0,7.6" fill="#1b1b1b"/></svg>
<svg style="left:988.00px;top:952.50px" width="20.00" height="20.00" viewBox="0 0 20 20"><path d="M6,2 V12 L10,17 L14,12 V2 M10,17 V12" fill="none" stroke="#262b30" stroke-width="1.3" stroke-linecap="round" stroke-linejoin="round"/></svg>
<div class="t" style="left:1015px;top:957.37px;font-size:11.5px;color:#111;font-weight:normal;">03 Architektu...</div>
<svg style="left:1096.1px;top:958.7px" width="3.8" height="7.6" viewBox="0 0 3.8 7.6"><polygon points="0,0 3.8,3.8 0,7.6" fill="#1b1b1b"/></svg>
<svg style="left:1111.00px;top:952.50px" width="20.00" height="20.00" viewBox="0 0 20 20"><rect x="2" y="4.5" width="16" height="11" fill="none" stroke="#262b30" stroke-width="1.3"/><rect x="5.5" y="7.5" width="9" height="5" fill="none" stroke="#262b30" stroke-width="1.1"/></svg>
<div class="t" style="left:1138px;top:957.37px;font-size:11.5px;color:#111;font-weight:normal;">03 Rzuty bud...</div>
<svg style="left:1219.1px;top:958.7px" width="3.8" height="7.6" viewBox="0 0 3.8 7.6"><polygon points="0,0 3.8,3.8 0,7.6" fill="#1b1b1b"/></svg>
<svg style="left:1235.00px;top:952.50px" width="20.00" height="20.00" viewBox="0 0 20 20"><path d="M4,6 V17 H11 M8,2 H14 L16,4 V8" fill="none" stroke="#262b30" stroke-width="1.2"/><rect x="11" y="10" width="6.5" height="7" fill="#555"/><path d="M9,5 L12,3 L12,7 Z" fill="#262b30"/></svg>
<div class="t" style="left:1263px;top:957.37px;font-size:11.5px;color:#111;font-weight:normal;">Brak zastąpień</div>
<svg style="left:1342.1px;top:958.7px" width="3.8" height="7.6" viewBox="0 0 3.8 7.6"><polygon points="0,0 3.8,3.8 0,7.6" fill="#1b1b1b"/></svg>
<svg style="left:1357.00px;top:952.50px" width="20.00" height="20.00" viewBox="0 0 20 20"><path d="M2,17 L10,4 L16,17 Z M10,4 V17" fill="none" stroke="#aaa" stroke-width="1"/><path d="M8,17 V9 L11.5,5.5 L15,9 V17 Z M10.5,17 V13 H12.5 V17" fill="none" stroke="#262b30" stroke-width="1.2"/></svg>
<div class="t" style="left:1384px;top:957.79px;font-size:11.0px;color:#111;font-weight:normal;">00 Pokaż Wsz...</div>
<svg style="left:1465.1px;top:958.7px" width="3.8" height="7.6" viewBox="0 0 3.8 7.6"><polygon points="0,0 3.8,3.8 0,7.6" fill="#1b1b1b"/></svg>
<svg style="left:1480.00px;top:952.50px" width="20.00" height="20.00" viewBox="0 0 20 20"><path d="M2,11 L7,6 L9,8 L14,3 M3,14 L8,9 M2,9 L6,5" fill="none" stroke="#262b30" stroke-width="1"/><rect x="8" y="9" width="10" height="8" rx="1" fill="#f0f0f0" stroke="#262b30" stroke-width="1.2"/><rect x="10.5" y="12" width="5" height="3.5" fill="none" stroke="#262b30" stroke-width="1"/></svg>
<div class="t" style="left:1507px;top:957.37px;font-size:11.5px;color:#111;font-weight:normal;">Tylko główny ...</div>
<svg style="left:1588.1px;top:958.7px" width="3.8" height="7.6" viewBox="0 0 3.8 7.6"><polygon points="0,0 3.8,3.8 0,7.6" fill="#1b1b1b"/></svg>
<svg style="left:1606.20px;top:956.20px" width="13.60" height="13.60" viewBox="0 0 20 20"><path d="M3,7 L7,3 H16 V13 L12,17 H3 Z M3,7 H12 V17 M12,7 L16,3" fill="none" stroke="#262b30" stroke-width="1.5" stroke-linejoin="round"/></svg>
<div class="t" style="left:1630px;top:957.37px;font-size:11.5px;color:#111;font-weight:normal;">Oświetlenie ...</div>
<svg style="left:1711.1px;top:958.7px" width="3.8" height="7.6" viewBox="0 0 3.8 7.6"><polygon points="0,0 3.8,3.8 0,7.6" fill="#1b1b1b"/></svg>
<div class="a" style="left:4.0px;top:984px;width:1px;height:14px;background:#6e6e6e;"></div>
<div class="a" style="left:71.0px;top:976px;width:1px;height:30px;background:#6e6e6e;"></div>
<div class="a" style="left:166.0px;top:976px;width:1px;height:30px;background:#6e6e6e;"></div>
<div class="a" style="left:261.0px;top:976px;width:1px;height:30px;background:#6e6e6e;"></div>
<div class="a" style="left:318.0px;top:983px;width:1px;height:14px;background:#6e6e6e;"></div>
<div class="a" style="left:372.0px;top:977px;width:1px;height:28px;background:#6e6e6e;"></div>
<div class="a" style="left:545.5px;top:977px;width:1px;height:28px;background:#6e6e6e;"></div>
<div class="a" style="left:694.5px;top:977px;width:1px;height:28px;background:#6e6e6e;"></div>
<div class="a" style="left:865.0px;top:980px;width:1px;height:13px;background:#6e6e6e;"></div>
<div class="a" style="left:899.0px;top:976px;width:1px;height:20px;background:#6e6e6e;"></div>
<div class="a" style="left:994.0px;top:976px;width:1px;height:20px;background:#6e6e6e;"></div>
<div class="a" style="left:1089.2px;top:976px;width:1px;height:20px;background:#6e6e6e;"></div>
<div class="a" style="left:1160.5px;top:980px;width:1px;height:13px;background:#6e6e6e;"></div>
<div class="a" style="left:1224.0px;top:976px;width:1px;height:20px;background:#6e6e6e;"></div>
<div class="a" style="left:1557.0px;top:983px;width:1px;height:11px;background:#6e6e6e;"></div>
<div class="a" style="left:1595.0px;top:975px;width:1px;height:29px;background:#6e6e6e;"></div>
<div class="a" style="left:1669.5px;top:975px;width:1px;height:30px;background:#6e6e6e;"></div>
<div class="a" style="left:1777.5px;top:975px;width:1px;height:30px;background:#6e6e6e;"></div>
<svg style="left:12px;top:978px" width="26" height="24" viewBox="12 978 26 24"><path d="M15.3,985.3 Q21,979.3 26.7,985.3 Q21,991.3 15.3,985.3 Z" fill="none" stroke="#262b30" stroke-width="1.05"/><circle cx="21" cy="985.2" r="1.6" fill="#262b30"/><path d="M15.3,996.5 Q21,990.5 26.7,996.5 Q21,1002.5 15.3,996.5 Z M15.2,999.6 L26.4,993.2" fill="none" stroke="#262b30" stroke-width="1.05"/><path d="M28.6,986.8 Q33.6,987.8 33.6,990.4 Q33.6,993 28.6,994" fill="none" stroke="#262b30" stroke-width="1.05"/><path d="M28,986.8 L30,985.2 M28,986.8 L29.8,988.6 M28,994 L30,992.3 M28,994 L29.8,995.8" stroke="#262b30" stroke-width="1.05"/></svg>
<svg style="left:42px;top:979px" width="24" height="23" viewBox="42 979 24 23"><path d="M46.3,991.6 V989.3 Q46.3,987.2 48.4,987.2 Q50.6,987.2 50.6,989.3 V991.6" fill="none" stroke="#262b30" stroke-width="1.05"/><path d="M44.4,991.6 H52.6 V996 Q52.6,998.6 48.5,999.8 Q44.4,998.6 44.4,996 Z" fill="#f0f0f0" stroke="#262b30" stroke-width="1.1" stroke-linejoin="round"/><path d="M48.5,993.4 V996.4" stroke="#262b30" stroke-width="1.2"/><path d="M52.4,985.6 V983.4 Q52.4,981.3 54.8,981.3 Q57.3,981.3 57.3,983.4 V985" fill="none" stroke="#262b30" stroke-width="1.05"/><path d="M55.3,985.1 H63.5 V989.5 Q63.5,992.2 59.4,993.4 Q55.3,992.2 55.3,989.5 Z" fill="#f0f0f0" stroke="#262b30" stroke-width="1.1" stroke-linejoin="round"/><path d="M59.4,987 V990" stroke="#262b30" stroke-width="1.2"/><path d="M55.6,997.2 Q57.3,999.6 59.5,997.8 L60.6,996.4" fill="none" stroke="#262b30" stroke-width="1.05"/><path d="M59.2,995.9 L61.3,995.3 L61.9,997.3" fill="none" stroke="#262b30" stroke-width="1.05"/></svg>
<div class="t" style="left:74px;top:978.67px;font-size:11.5px;color:#111;font-weight:normal;width:90px;overflow:hidden">Warstwa zaznaczenia</div>
<div class="t" style="left:169px;top:978.67px;font-size:11.5px;color:#111;font-weight:normal;width:90px;overflow:hidden">Wszystkie warstwy</div>
<svg style="left:79.9px;top:990px" width="18" height="16" viewBox="79.9 990 18 16"><path d="M80.9,998.5 Q88.5,992.6 96.10000000000001,998.5 Q88.5,1004.4 80.9,998.5 Z M81.5,1004.6 L95.10000000000001,992.4" fill="none" stroke="#a8aaac" stroke-width="1.05"/></svg>
<svg style="left:112.8px;top:992px" width="14" height="14" viewBox="112.8 992 14 14"><path d="M117.39999999999999,997.6 V996.2 Q117.39999999999999,994.2 119.45,994.2 Q121.5,994.2 121.5,996.2 V997.6" fill="none" stroke="#a8aaac" stroke-width="1"/><path d="M115.8,997.6 H123.1 V1001 Q123.1,1003.4 119.45,1004.3 Q115.8,1003.4 115.8,1001 Z" fill="none" stroke="#a8aaac" stroke-width="1" stroke-linejoin="round"/><path d="M119.45,999.2 V1001.4" stroke="#a8aaac" stroke-width="1"/></svg>
<svg style="left:142.6px;top:992px" width="14" height="14" viewBox="142.6 992 14 14"><path d="M144.1,997 V996.2 Q144.1,994.4 146.1,994.4 Q148.1,994.4 148.4,996.4" fill="none" stroke="#a8aaac" stroke-width="1"/><path d="M145.6,997.6 H152.9 V1001 Q152.9,1003.4 149.25,1004.3 Q145.6,1003.4 145.6,1001 Z" fill="none" stroke="#a8aaac" stroke-width="1" stroke-linejoin="round"/><path d="M149.25,999.2 V1001.4" stroke="#a8aaac" stroke-width="1"/></svg>
<svg style="left:174.8px;top:990px" width="18" height="16" viewBox="174.8 990 18 16"><path d="M175.8,998.5 Q183.4,992.6 191.0,998.5 Q183.4,1004.4 175.8,998.5 Z M176.4,1004.6 L190.0,992.4" fill="none" stroke="#262b30" stroke-width="1.15"/></svg>
<svg style="left:207.6px;top:992px" width="14" height="14" viewBox="207.6 992 14 14"><path d="M212.2,997.6 V996.2 Q212.2,994.2 214.25,994.2 Q216.29999999999998,994.2 216.29999999999998,996.2 V997.6" fill="none" stroke="#262b30" stroke-width="1"/><path d="M210.6,997.6 H217.9 V1001 Q217.9,1003.4 214.25,1004.3 Q210.6,1003.4 210.6,1001 Z" fill="none" stroke="#262b30" stroke-width="1" stroke-linejoin="round"/><path d="M214.25,999.2 V1001.4" stroke="#262b30" stroke-width="1"/></svg>
<svg style="left:270px;top:978px" width="18" height="26" viewBox="270 978 18 26"><path d="M273.6,985.8 Q273.6,980.8 279,980.8 Q284.6,980.8 284.6,986" fill="none" stroke="#a8aaac" stroke-width="1.05"/><path d="M281.8,986 H284.6 V983.2" fill="none" stroke="#a8aaac" stroke-width="1.05"/><path d="M283.5,1001.2 Q283.5,996 278.2,996 Q273.5,996 273.5,1000.6" fill="none" stroke="#a8aaac" stroke-width="1.05"/><path d="M273.5,998 V1001 H276.4" fill="none" stroke="#a8aaac" stroke-width="1.05"/></svg>
<div class="a" style="left:324.5px;top:977px;width:27.5px;height:27px;background:#cce4f7;border:1px solid #9ccaf0;border-radius:4px"></div>
<svg style="left:326px;top:978px" width="26" height="26" viewBox="326 978 26 26"><g transform="translate(-101,929.5)"><path d="M430.5,52.2 V69.5 H448" fill="none" stroke="#f5861f" stroke-width="1.15" stroke-dasharray="2.4,1.4"/><path d="M432.6,53.3 V67.3 H446.8 Z M435.7,59.3 V64.3 H440.7 Z" fill="none" stroke="#262b30" stroke-width="1.3"/></g></svg>
<div class="a" style="left:354px;top:977px;width:11.5px;height:27px;background:#fafafa;border:1px solid #d6d6d6;border-radius:4px"></div>
<svg style="left:358.05px;top:987.0px" width="3.5" height="7.0" viewBox="0 0 3.5 7.0"><polygon points="0,0 3.5,3.5 0,7.0" fill="#1b1b1b"/></svg>
<svg style="left:386px;top:982px" width="20" height="20" viewBox="386 982 20 20"><path d="M389.3,988.6 L399.6,998.5" stroke="#262b30" stroke-width="1.05"/><path d="M394.9,993 L403.3,984.4" stroke="#262b30" stroke-width="1.6"/></svg>
<svg style="left:413.25px;top:986.5px" width="3.5" height="7.0" viewBox="0 0 3.5 7.0"><polygon points="0,0 3.5,3.5 0,7.0" fill="#1b1b1b"/></svg>
<div class="a" style="left:424px;top:977px;width:40px;height:27px;background:#f3f3f3;border-radius:4px"></div>
<svg style="left:430px;top:982px" width="16" height="20" viewBox="430 982 16 20"><path d="M434.3,986.5 H440 M437.2,983.7 V989.3 M437.5,990 L441.3,994.3 L437.5,998.4" fill="none" stroke="#b0b2b4" stroke-width="1"/></svg>
<svg style="left:457.25px;top:986.5px" width="3.5" height="7.0" viewBox="0 0 3.5 7.0"><polygon points="0,0 3.5,3.5 0,7.0" fill="#b5b5b5"/></svg>
<div class="a" style="left:467px;top:977px;width:41px;height:27px;background:#fafafa;border:1px solid #d6d6d6;border-radius:4px"></div>
<svg style="left:473.00px;top:980.00px" width="20.00" height="20.00" viewBox="0 0 20 20"><rect x="5" y="5" width="11" height="11" fill="none" stroke="#262b30" stroke-width="1.4"/><path d="M8,2 H18 V12 M8,8 V13 H12" fill="none" stroke="#262b30" stroke-width="1.1"/><rect x="3.5" y="3.5" width="3" height="3" fill="#262b30"/><rect x="14.5" y="14.5" width="3" height="3" fill="#262b30"/><rect x="3.5" y="14.5" width="3" height="3" fill="#262b30"/></svg>
<svg style="left:501.25px;top:986.5px" width="3.5" height="7.0" viewBox="0 0 3.5 7.0"><polygon points="0,0 3.5,3.5 0,7.0" fill="#1b1b1b"/></svg>
<div class="a" style="left:511px;top:977px;width:27px;height:27px;background:#fafafa;border:1px solid #d6d6d6;border-radius:4px"></div>
<svg style="left:514.50px;top:980.50px" width="20.00" height="20.00" viewBox="0 0 20 20"><path d="M9,9 L17,17" stroke="#262b30" stroke-width="2"/><path d="M6.5,7 L9,5.5 L11,7.5 L9.5,10 Z" fill="#fff" stroke="#262b30" stroke-width="1"/><circle cx="4" cy="4" r="0.6" fill="#666"/><circle cx="7" cy="2.5" r="0.6" fill="#666"/><circle cx="11" cy="3" r="0.6" fill="#666"/><circle cx="2.5" cy="8" r="0.6" fill="#666"/><circle cx="3.5" cy="12" r="0.6" fill="#666"/><circle cx="13" cy="6" r="0.6" fill="#666"/><circle cx="6" cy="14" r="0.6" fill="#666"/></svg>
<div class="a" style="left:552px;top:977px;width:27px;height:27px;background:#cce4f7;border:1px solid #9ccaf0;border-radius:4px"></div>
<svg style="left:556.00px;top:980.50px" width="20.00" height="20.00" viewBox="0 0 20 20"><path d="M2,10 H8 M12,10 H18 M10,7 V13 M9,7 L12,10 L17,3.5" fill="none" stroke="#262b30" stroke-width="1.3"/><path d="M3,15.5 H17" stroke="#2f7de1" stroke-width="1.2" stroke-dasharray="2.2,1.3"/></svg>
<div class="a" style="left:583px;top:977px;width:11px;height:27px;background:#fafafa;border:1px solid #d6d6d6;border-radius:4px"></div>
<svg style="left:586.75px;top:987.0px" width="3.5" height="7.0" viewBox="0 0 3.5 7.0"><polygon points="0,0 3.5,3.5 0,7.0" fill="#1b1b1b"/></svg>
<div class="t" style="left:598px;top:977.57px;font-size:11.5px;color:#111;font-weight:normal;">Połowa</div>
<div class="t" style="left:600px;top:992.27px;font-size:11.5px;color:#6b6b6b;font-weight:normal;">2</div>
<div class="a" style="left:672px;top:977px;width:14.5px;height:14.5px;background:#fafafa;border:1px solid #d6d6d6;border-radius:4px"></div>
<svg style="left:677.55px;top:980.7px" width="3.5" height="7.0" viewBox="0 0 3.5 7.0"><polygon points="0,0 3.5,3.5 0,7.0" fill="#1b1b1b"/></svg>
<div class="a" style="left:702px;top:981px;width:63.5px;height:19.5px;background:#f6f6f6;border:1px solid #e8e8e8;border-radius:4px"></div>
<div class="t" style="left:734px;top:985.77px;font-size:11.5px;color:#8a8a8a;font-weight:normal;transform:translateX(-50%);">OK</div>
<div class="a" style="left:772px;top:981px;width:66px;height:19.5px;background:#f6f6f6;border:1px solid #e8e8e8;border-radius:4px"></div>
<div class="t" style="left:805px;top:985.77px;font-size:11.5px;color:#8a8a8a;font-weight:normal;transform:translateX(-50%);">Anuluj</div>
<div class="a" style="left:868px;top:974.3px;width:28.6px;height:22.4px;background:#cce4f7;border:1px solid #9ccaf0;border-radius:4px"></div>
<svg style="left:871.50px;top:976.00px" width="20.00" height="20.00" viewBox="0 0 20 20"><path d="M2,5 L9,3 V17 L2,15 Z M9,3 H16 V9 M9,17 H11" fill="none" stroke="#262b30" stroke-width="1.4"/><path d="M11,7 L17.5,13 L14.5,13.5 L16,17 L14.5,17.5 L13,14.3 L11,16 Z" fill="#fff" stroke="#262b30" stroke-width="1"/></svg>
<svg style="left:907.00px;top:976.00px" width="20.00" height="20.00" viewBox="0 0 20 20"><path d="M6,5 H2 V14 H6 M14,5 H18 V14 H14" fill="none" stroke="#a9c9f2" stroke-width="1.2"/><circle cx="10" cy="3.5" r="1.4" fill="none" stroke="#b5b5b5" stroke-width="1"/><path d="M10,5.5 V11 L7,17 M10,11 L13,17 M6.5,8 H13.5" fill="none" stroke="#b5b5b5" stroke-width="1.1"/></svg>
<svg style="left:935.50px;top:976.00px" width="20.00" height="20.00" viewBox="0 0 20 20"><rect x="6.5" y="5" width="7" height="9" rx="1" fill="none" stroke="#b5b5b5" stroke-width="1.1"/><circle cx="10" cy="9.5" r="1.5" fill="none" stroke="#b5b5b5" stroke-width="1"/><path d="M10,1 L8.5,2.5 M10,1 L11.5,2.5 M10,19 L8.5,17.5 M10,19 L11.5,17.5 M2,9.5 L3.5,8 M2,9.5 L3.5,11 M18,9.5 L16.5,8 M18,9.5 L16.5,11 M10,14 V18" fill="none" stroke="#b5b5b5" stroke-width="1"/></svg>
<svg style="left:965.00px;top:976.00px" width="20.00" height="20.00" viewBox="0 0 20 20"><path d="M3.5,12.5 Q2,4 10,3 Q17,3 17,11 M16,10 L17,12.5 L18.5,10.5" fill="none" stroke="#262b30" stroke-width="1.3"/><rect x="7.5" y="5.5" width="5" height="6" fill="none" stroke="#262b30" stroke-width="1.1"/><path d="M10,11.5 V14 L7,18 M10,14 L13,18" fill="none" stroke="#262b30" stroke-width="1.2"/></svg>
<svg style="left:1001.50px;top:976.00px" width="20.00" height="20.00" viewBox="0 0 20 20"><circle cx="10" cy="10" r="6.5" fill="none" stroke="#b5b5b5" stroke-width="1.1"/><circle cx="10" cy="10" r="2" fill="none" stroke="#b5b5b5" stroke-width="1.1"/><path d="M10,1 V19 M1,10 H19 M4,4 L6,6" fill="none" stroke="#b5b5b5" stroke-width="1.1"/></svg>
<svg style="left:1030.50px;top:976.00px" width="20.00" height="20.00" viewBox="0 0 20 20"><path d="M5,1 V9 M1,5 H9" stroke="#b5b5b5" stroke-width="1.1"/><rect x="9" y="11" width="8" height="7" rx="1.5" fill="none" stroke="#b5b5b5" stroke-width="1.1"/><path d="M10.5,11 V9 Q13,6 15.5,9 V11" fill="none" stroke="#b5b5b5" stroke-width="1.1"/></svg>
<svg style="left:1060.00px;top:976.00px" width="20.00" height="20.00" viewBox="0 0 20 20"><path d="M1.5,6 V2 H5.5 M14.5,2 H18.5 V6 M18.5,14 V18 H14.5 M5.5,18 H1.5 V14 M4.5,9 L10,4 L15.5,9 M6,8 V15 H14 V8 M8.5,15 V11 H11.5 V15" fill="none" stroke="#262b30" stroke-width="1.3"/></svg>
<svg style="left:1096.50px;top:976.00px" width="20.00" height="20.00" viewBox="0 0 20 20"><rect x="7" y="4" width="6" height="7" fill="none" stroke="#262b30" stroke-width="1.2"/><circle cx="10" cy="7.5" r="1.5" fill="none" stroke="#262b30" stroke-width="1"/><path d="M1.5,7.5 H4.5 M15.5,7.5 H18.5 M10,11 V13 L5.5,18 M10,13 L14.5,18 M10,13 V18" fill="none" stroke="#262b30" stroke-width="1.3"/></svg>
<svg style="left:1126.00px;top:976.00px" width="20.00" height="20.00" viewBox="0 0 20 20"><path d="M4,12 L10,9.5 L16,12 V16 L10,18.5 L4,16 Z M4,12 L7,10 M7.5,13.5 V17.5" fill="none" stroke="#262b30" stroke-width="1.2"/><path d="M3.5,6 Q5.5,3 8.5,4.5 M7,3 L8.8,4.6 L6.8,5.8 M16.5,6 Q14.5,3 11.5,4.5 M13,3 L11.2,4.6 L13.2,5.8 M10,2 V6" fill="none" stroke="#2f7de1" stroke-width="1.1"/></svg>
<svg style="left:1166.00px;top:976.00px" width="20.00" height="20.00" viewBox="0 0 20 20"><path d="M2,3 V13 L5,17 L8,13 V3 M5,17 V12" fill="none" stroke="#262b30" stroke-width="1.2"/><path d="M9,17 L15,9 L18,17 Z M10,10 L12,7 L14,10 M14,8 L16,4.5 L18,8" fill="none" stroke="#262b30" stroke-width="1.1"/><path d="M11,15 L14,11 M13,17 L16,13" stroke="#262b30" stroke-width="1"/></svg>
<svg style="left:1195.00px;top:976.00px" width="20.00" height="20.00" viewBox="0 0 20 20"><rect x="2.5" y="2.5" width="15.5" height="15" rx="1" fill="none" stroke="#262b30" stroke-width="1.4"/><rect x="5" y="5.5" width="4.5" height="9.5" fill="none" stroke="#262b30" stroke-width="1.2"/><rect x="11" y="5.5" width="4.5" height="9.5" fill="none" stroke="#262b30" stroke-width="1.2"/></svg>
<svg style="left:1232.00px;top:976.00px" width="20.00" height="20.00" viewBox="0 0 20 20"><path d="M3,7 Q3,5 6,4.5 H16 Q17.5,5 16,6.5 Q14,8 10,8.5 H4 M3,10 Q3,8.5 5,8.5 M16,7 Q17.5,8 16,9.5 Q14,11 10,11.5 H4 Q3,11.5 3,10 M3,13 Q3,11.5 5,11.5 M16,10 Q17.5,11 16,12.5 Q14,14 10,14.5 H4 Q3,14.5 3,13" fill="none" stroke="#262b30" stroke-width="1.2"/></svg>
<svg style="left:1261.00px;top:976.00px" width="20.00" height="20.00" viewBox="0 0 20 20"><path d="M2.5,9 L6,5.5 L9,8.5 L12,5.5 L15,8.5 L18,5.5" fill="none" stroke="#262b30" stroke-width="1"/><path d="M2,12 H18" stroke="#2f7de1" stroke-width="1.2"/><path d="M2,14.5 H18" stroke="#262b30" stroke-width="1.6"/></svg>
<svg style="left:1290.50px;top:976.00px" width="20.00" height="20.00" viewBox="0 0 20 20"><path d="M2,16.5 L8,3.5 H14 L18,16.5 Z M4,16.5 L10,5 M8,16.5 L12.5,8 M12,16.5 L15,11.5 M15,16.5 L16,14" fill="none" stroke="#262b30" stroke-width="1.2"/></svg>
<svg style="left:1319.50px;top:976.00px" width="20.00" height="20.00" viewBox="0 0 20 20"><path d="M2,7 L5,3.5 H18 V14 L15,17.5 H2 Z M2,7 H15 V17.5 M15,7 L18,3.5 M2,10.5 H15 M2,14 H15 M6,7 V10.5 M10,10.5 V14 M6,14 V17.5 M11,7 V10.5" fill="none" stroke="#262b30" stroke-width="1.1"/></svg>
<svg style="left:1348.00px;top:976.00px" width="20.00" height="20.00" viewBox="0 0 20 20"><path d="M2,3 H18" stroke="#262b30" stroke-width="1"/><path d="M2,5 H18" stroke="#2f7de1" stroke-width="1.2"/><path d="M2,8 H18 M2,17 H18 M3,10 L7,16 M6,10 L10,16 M9,10 L13,16 M12,10 L16,16 M15,10 L18,14.5" fill="none" stroke="#262b30" stroke-width="1.1"/></svg>
<svg style="left:1376.50px;top:976.00px" width="20.00" height="20.00" viewBox="0 0 20 20"><path d="M7,2 V12 L10,17 L13,12 V2 M10,17 V13 M2.5,17.5 H10" fill="none" stroke="#262b30" stroke-width="1.1"/></svg>
<svg style="left:1405.50px;top:976.00px" width="20.00" height="20.00" viewBox="0 0 20 20"><path d="M10,1.5 V6 M7.5,6 H12.5 V9.5 H7.5 Z M6.5,9.5 H13.5 L14.5,16.5 H4.5 Z M2.5,17.5 H14.5 M5,17 L6,15.5 M7.5,17 L8.5,15.5 M10,17 L11,15.5" fill="none" stroke="#262b30" stroke-width="1.2"/></svg>
<svg style="left:1435.00px;top:976.00px" width="20.00" height="20.00" viewBox="0 0 20 20"><path d="M2,3.5 H8 V6.5 H10 V3.5 H12 L13,4.5 V9 H18 V16.5 H2 Z" fill="none" stroke="#262b30" stroke-width="1.2"/><path d="M7,9 H11 M7,11.5 H11 M7,14 H11" stroke="#2f7de1" stroke-width="1.1"/></svg>
<svg style="left:1464.00px;top:976.00px" width="20.00" height="20.00" viewBox="0 0 20 20"><path d="M3,2.5 H17 M3,4.5 H17 M3,15.5 H17 M3,17.5 H17 M10,4.5 V15.5" fill="none" stroke="#262b30" stroke-width="1.5"/></svg>
<svg style="left:1493.00px;top:976.00px" width="20.00" height="20.00" viewBox="0 0 20 20"><rect x="2" y="3" width="16" height="13" fill="#262b30"/><path d="M2,6 H18 M2,9 H18 M2,12 H18 M5,3 V16 M8,3 V16 M11,3 V16 M14,3 V16" stroke="#f0f0f0" stroke-width="0.9"/><rect x="5.5" y="9.5" width="2" height="2" fill="#2f7de1"/><rect x="8.5" y="9.5" width="2" height="2" fill="#2f7de1"/><rect x="5.5" y="12.5" width="2" height="2" fill="#2f7de1"/><rect x="11.5" y="6.5" width="2" height="2" fill="#2f7de1"/></svg>
<svg style="left:1522.00px;top:976.00px" width="20.00" height="20.00" viewBox="0 0 20 20"><path d="M8,3 Q3,4 3,9 Q3,14 8,14.5" fill="none" stroke="#2f7de1" stroke-width="1.4"/><path d="M10,5 Q10,1.5 14,2 Q17,3 16,6 M12,7 Q16,7 16.5,11 Q16.5,15 13,15.5 Q10,16 9.5,13" fill="none" stroke="#b5b5b5" stroke-width="1.2"/></svg>
<div class="a" style="left:1560px;top:974.5px;width:31.5px;height:30px;background:#cce4f7;border:1px solid #9ccaf0;border-radius:4px"></div>
<svg style="left:1561px;top:975px" width="30" height="30" viewBox="1561 975 30 30"><defs><linearGradient id="d5g" x1="0" y1="0" x2="0" y2="1"><stop offset="0" stop-color="#2a5cff"/><stop offset="1" stop-color="#a80ef2"/></linearGradient></defs><circle cx="1575" cy="989" r="12" fill="url(#d5g)"/><circle cx="1585" cy="999" r="6.1" fill="#cde6fa"/><path d="M1570.4,985.4 L1575.3,982.8 L1579.9,985.5 V991.3 L1571.4,995.2 L1570.4,993.2 Z M1572.7,986.7 V991.8 L1577.3,989.7 V987 L1575.3,985.7 Z" fill="#fff" fill-rule="evenodd"/><path d="M1581.5,998.6 A3.6,3.6 0 0 1 1588.3,997.8 M1588.6,1000.2 A3.6,3.6 0 0 1 1581.8,1001" fill="none" stroke="#a21cf0" stroke-width="1.4"/><path d="M1587.2,996.4 L1589.4,998.6 L1586.6,999.2 Z M1582.9,1002.4 L1580.7,1000.2 L1583.5,999.6 Z" fill="#a21cf0"/></svg>
<svg style="left:1602.80px;top:975.80px" width="26.40" height="26.40" viewBox="0 0 22 22"><path d="M3,6 L11,2.5 L18.5,6 V14 L11,18.5 L3,14 Z M3,6 L11,9.5 L18.5,6 M11,9.5 V18.5" fill="none" stroke="#111" stroke-width="1.6" stroke-linejoin="round"/><path d="M4,8 L7,9.5 V12.5 L4,11 Z" fill="#555"/><path d="M7,12.5 L10,14 V17 L7,15.5 Z" fill="#999"/><path d="M14,17 H19 M17.5,15.5 L19,17 L17.5,18.5" fill="none" stroke="#8a55d8" stroke-width="1.4"/></svg>
<svg style="left:1637.80px;top:975.80px" width="26.40" height="26.40" viewBox="0 0 22 22"><path d="M5,5 A8,8 0 0 1 16,4 M18,9 A8,8 0 0 1 14,17.5 M6,17 A8,8 0 0 1 3,9" fill="none" stroke="#9a72dc" stroke-width="2"/><path d="M14.5,2 L17,4.8 L13.5,5.5 Z M7.5,18.5 L4.5,16.5 L8,15 Z" fill="#9a72dc"/><circle cx="10.5" cy="10.5" r="3" fill="#2a2a2a"/></svg>
<svg style="left:1676.80px;top:975.80px" width="26.40" height="26.40" viewBox="0 0 22 22"><rect x="1.5" y="5" width="15" height="12" rx="1" fill="none" stroke="#262b30" stroke-width="1.6"/><path d="M16.5,9 L21,6 V16 L16.5,13" fill="none" stroke="#262b30" stroke-width="1.6"/><path d="M5,9.5 H12 M10.5,8 L12,9.5 L10.5,11 M12,12.5 H5 M6.5,11 L5,12.5 L6.5,14" fill="none" stroke="#8a55d8" stroke-width="1.2"/></svg>
<svg style="left:1711.80px;top:975.80px" width="26.40" height="26.40" viewBox="0 0 22 22"><path d="M1.5,7 H6 L8,4 H14 L16,7 H20 V17 H1.5 Z" fill="none" stroke="#262b30" stroke-width="1.6" stroke-linejoin="round"/><circle cx="11" cy="12" r="3.2" fill="none" stroke="#262b30" stroke-width="1.6"/><path d="M17,18.5 H22 M20.5,17 L22,18.5 L20.5,20" fill="none" stroke="#8a55d8" stroke-width="1.3"/></svg>
<svg style="left:1745.80px;top:975.80px" width="26.40" height="26.40" viewBox="0 0 22 22"><path d="M6,16 A8,8 0 1 1 16,16" fill="none" stroke="#262b30" stroke-width="1.6"/><path d="M8,8 L11,11.5 L14,8 M11,11.5 V15" fill="none" stroke="#262b30" stroke-width="1.5"/><path d="M8.5,18.5 H13.5 L11,20 Z" fill="#262b30"/><path d="M15,16.5 H21 M18,13.5 V19.5" stroke="#8a55d8" stroke-width="1.5"/></svg>
<svg style="left:1785.80px;top:975.80px" width="26.40" height="26.40" viewBox="0 0 22 22"><path d="M3,6 L11,2.5 L18.5,6 V14 L11,18.5 L3,14 Z M3,6 L11,9.5 L18.5,6 M11,9.5 V18.5" fill="none" stroke="#111" stroke-width="1.5" stroke-linejoin="round"/><path d="M17,13 V20 M15,18 L17,20.5 L19,18" fill="none" stroke="#8a55d8" stroke-width="1.4"/></svg>
<svg style="left:1815.80px;top:975.80px" width="26.40" height="26.40" viewBox="0 0 22 22"><path d="M11,1.5 L13.5,3.5 L16.5,3 L17.5,6 L20.5,7.5 L19.5,10.5 L20.5,13.5 L17.5,15 L16.5,18 L13.5,17.5 L11,19.5 L8.5,17.5 L5.5,18 L4.5,15 L1.5,13.5 L2.5,10.5 L1.5,7.5 L4.5,6 L5.5,3 L8.5,3.5 Z" fill="none" stroke="#111" stroke-width="1.6" stroke-linejoin="round"/><circle cx="11" cy="10.5" r="4" fill="#a98ae8"/></svg>
<div class="t" style="left:2px;top:1015.55px;font-size:11.75px;color:#111;font-weight:normal;">Kliknij element lub narysuj obszar. Przytrzymaj Ctrl+Shift aby przełączyć tryb zaznaczania: cały element / część elementu.</div>
<svg style="left:1745px;top:1013px" width="20" height="17" viewBox="0 0 20 17"><rect x="1" y="1" width="13" height="11" fill="none" stroke="#333" stroke-width="1.1"/><path d="M1,3.5 H14" stroke="#333" stroke-width="1"/><rect x="4" y="4" width="12" height="10" fill="#f0f0f0" stroke="#333" stroke-width="1.1"/><circle cx="15" cy="13" r="3.8" fill="#fff" stroke="#e5483a" stroke-width="1.2"/><path d="M12.5,15.5 L17.5,10.5" stroke="#e5483a" stroke-width="1.2"/></svg>
<div class="a" style="left:1766.5px;top:1012px;width:1px;height:18px;background:#d0d0d0;"></div>
<div class="t" style="left:1783px;top:1016.33px;font-size:12.6px;color:#5a5a5a;font-weight:normal;">GRAPHISOFT ID</div>
<div class="a" style="left:1896.5px;top:1012px;width:1px;height:18px;background:#d0d0d0;"></div>
<svg style="left:817px;top:1044px" width="24" height="24" viewBox="0 0 24 24"><defs><linearGradient id="wg" x1="0" y1="0" x2="1" y2="1"><stop offset="0" stop-color="#63d0ff"/><stop offset="1" stop-color="#1a8fe0"/></linearGradient></defs><rect x="0.5" y="0.5" width="11" height="11" fill="url(#wg)"/><rect x="12.5" y="0.5" width="11" height="11" fill="url(#wg)"/><rect x="0.5" y="12.5" width="11" height="11" fill="url(#wg)"/><rect x="12.5" y="12.5" width="11" height="11" fill="url(#wg)"/></svg>
<svg style="left:861px;top:1045px" width="24" height="22" viewBox="0 0 24 22"><rect x="1" y="9" width="14" height="12" rx="1.5" fill="#555"/><rect x="5" y="5" width="14" height="12" rx="1.5" fill="#a8a8a8"/><rect x="9" y="1" width="14" height="12" rx="1.5" fill="#f2f2f2"/></svg>
<svg style="left:905px;top:1045px" width="24" height="22" viewBox="0 0 24 22"><path d="M1,4 Q1,2 3,2 H9 L11,4.5 H21 Q23,4.5 23,6.5 V19 Q23,21 21,21 H3 Q1,21 1,19 Z" fill="#f5b92b"/><path d="M1,8 H23 V19 Q23,21 21,21 H3 Q1,21 1,19 Z" fill="#ffd45a"/><rect x="8" y="15" width="8" height="5" rx="1" fill="#1a73d6"/></svg>
<svg style="left:949px;top:1044px" width="24" height="24" viewBox="0 0 24 24"><circle cx="12" cy="12" r="11.5" fill="#1ed760"/><path d="M5.5,8.5 Q12,6.5 18.5,9.5 M6.5,12 Q12,10.5 17.5,13 M7.5,15.3 Q12,14 16.5,16" fill="none" stroke="#191414" stroke-width="1.9" stroke-linecap="round"/></svg>
<svg style="left:993px;top:1044px" width="24" height="24" viewBox="0 0 24 24"><circle cx="12" cy="12" r="11.5" fill="#db4437"/><path d="M12,12 L22.4,6.5 A11.5,11.5 0 0 1 14,23.3 Z" fill="#f4c20d"/><path d="M12,12 L14,23.3 A11.5,11.5 0 0 1 1.6,7 Z" fill="#0f9d58"/><circle cx="12" cy="12" r="5.3" fill="#fff"/><circle cx="12" cy="12" r="4.2" fill="#4285f4"/></svg>
<div class="a" style="left:1030px;top:1036px;width:39px;height:39px;background:rgba(255,255,255,0.08);border-radius:5px;border:1px solid rgba(255,255,255,0.06)"></div>
<svg style="left:1039px;top:1046px" width="21" height="20" viewBox="0 0 21 20"><rect x="0.5" y="0.5" width="20" height="19" rx="3" fill="#fff"/><path d="M3.5,15 C6,8 8.5,5 11,5 C13,5 14,6.5 14.5,8.5" fill="none" stroke="#139fd6" stroke-width="2" stroke-linecap="round"/><rect x="13.3" y="10.5" width="2.6" height="2.6" fill="#139fd6"/></svg>
<div class="a" style="left:1041px;top:1073px;width:16px;height:3px;background:#e3a6e8;border-radius:2px"></div>
<svg style="left:1080px;top:1043px" width="26" height="26" viewBox="1080 1043 26 26"><defs><linearGradient id="dg" x1="0" y1="0" x2="0" y2="1"><stop offset="0" stop-color="#3a56f5"/><stop offset="1" stop-color="#a51ef0"/></linearGradient></defs><circle cx="1093" cy="1056" r="11.5" fill="url(#dg)"/><g transform="translate(1093,1056) scale(0.95) translate(-1575,-989)"><path d="M1570.4,985.4 L1575.3,982.8 L1579.9,985.5 V991.3 L1571.4,995.2 L1570.4,993.2 Z M1572.7,986.7 V991.8 L1577.3,989.7 V987 L1575.3,985.7 Z" fill="#fff" fill-rule="evenodd"/></g></svg>
<div class="a" style="left:1001px;top:1073px;width:7px;height:2.5px;background:#9a9a9a;border-radius:2px"></div>
<div class="a" style="left:1089px;top:1073px;width:7px;height:2.5px;background:#9a9a9a;border-radius:2px"></div>
<svg style="left:1724px;top:1052px" width="14" height="8" viewBox="0 0 14 8"><path d="M1,7 L7,1 L13,7" fill="none" stroke="#fff" stroke-width="1.3"/></svg>
<svg style="left:1752px;top:1048px" width="22" height="14" viewBox="0 0 22 14"><path d="M4,13 Q0.5,13 0.5,10 Q0.5,7 4,7 Q5,2 10,2 Q14,2 15.5,6 Q21,6 21,10 Q21,13 17,13 Z" fill="#d8d8d8"/></svg>
<svg style="left:1786px;top:1046px" width="20" height="19" viewBox="0 0 20 19"><rect x="1" y="2" width="13" height="10" fill="none" stroke="#fff" stroke-width="1.2"/><path d="M5,15 H10 M7.5,12 V15 M14,5 H18 V16 H11 M16,14 V16" fill="none" stroke="#fff" stroke-width="1.2"/><rect x="15" y="1" width="3.5" height="6" fill="none" stroke="#fff" stroke-width="1"/></svg>
<svg style="left:1810px;top:1047px" width="18" height="17" viewBox="0 0 18 17"><path d="M1.5,6 H5 L9.5,2 V15 L5,11 H1.5 Z" fill="none" stroke="#fff" stroke-width="1.2"/><path d="M12,5.5 Q13.5,8.5 12,11.5 M14.5,3.5 Q17,8.5 14.5,13.5" fill="none" stroke="#fff" stroke-width="1.1"/></svg>
<div class="t" style="left:1900px;top:1042.68px;font-size:11.6px;color:#ffffff;font-weight:normal;transform:translateX(-100%);">14:17</div>
<div class="t" style="left:1900px;top:1058.68px;font-size:11.6px;color:#ffffff;font-weight:normal;transform:translateX(-100%);">16.11.2025</div>
</body></html>
